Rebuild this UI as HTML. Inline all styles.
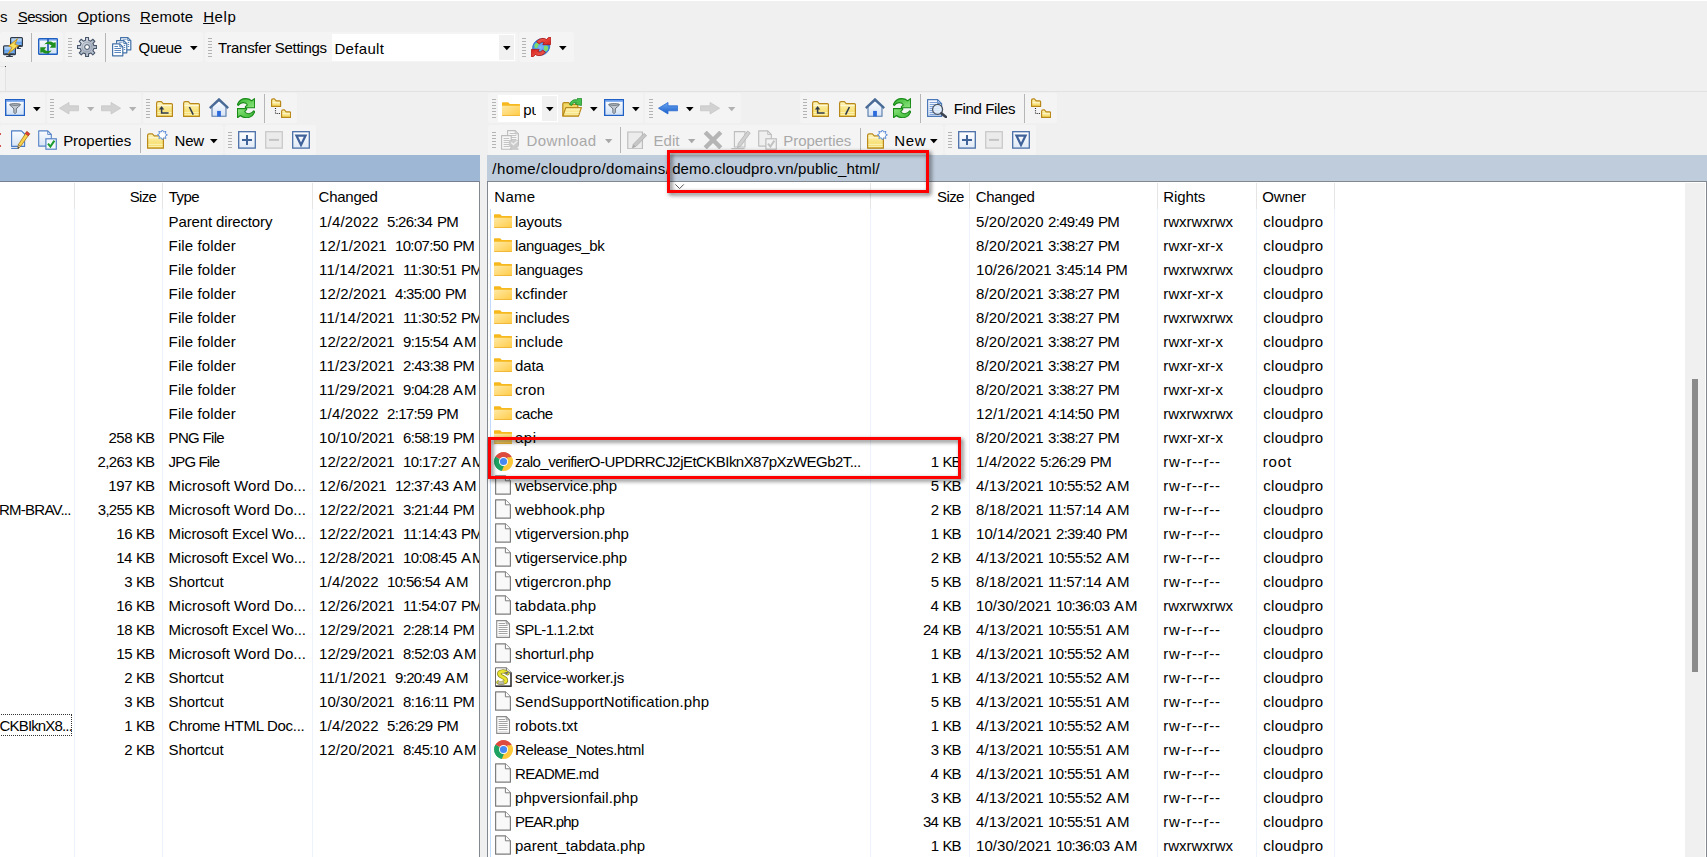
<!DOCTYPE html>
<html><head><meta charset="utf-8"><title>WinSCP</title>
<style>
html,body{margin:0;padding:0}
body{width:1707px;height:857px;overflow:hidden;position:relative;background:#f0f0f0;font-family:"Liberation Sans", sans-serif;font-size:15px}
.t{position:absolute;white-space:pre;line-height:20px;height:20px}
u{text-decoration-thickness:1px;text-underline-offset:1px}
</style></head><body>

<svg width="0" height="0" style="position:absolute">
<defs>
<linearGradient id="gFold" x1="0" y1="0" x2="1" y2="1"><stop offset="0" stop-color="#ffe9a6"/><stop offset="1" stop-color="#ffcb45"/></linearGradient>
<linearGradient id="gFoldT" x1="0" y1="0" x2="0" y2="1"><stop offset="0" stop-color="#fef6c0"/><stop offset="0.55" stop-color="#f9e482"/><stop offset="1" stop-color="#f5d962"/></linearGradient>
<linearGradient id="gMon" x1="0" y1="0" x2="0" y2="1"><stop offset="0" stop-color="#cfe4fb"/><stop offset="0.45" stop-color="#8fc0f5"/><stop offset="0.5" stop-color="#5f9eea"/><stop offset="1" stop-color="#8cc0f7"/></linearGradient>
<linearGradient id="gGear" x1="0" y1="0" x2="1" y2="1"><stop offset="0" stop-color="#f4f6f9"/><stop offset="0.6" stop-color="#aab4c2"/><stop offset="1" stop-color="#d5dbe3"/></linearGradient>
<linearGradient id="gGreen" x1="0" y1="0" x2="1" y2="1"><stop offset="0" stop-color="#35b52f"/><stop offset="1" stop-color="#8fe680"/></linearGradient>
<linearGradient id="gBlueArr" x1="0" y1="0" x2="0" y2="1"><stop offset="0" stop-color="#6aa8f5"/><stop offset="1" stop-color="#1b5ec8"/></linearGradient>
<linearGradient id="gPane" x1="0" y1="0" x2="0" y2="1"><stop offset="0" stop-color="#ffffff"/><stop offset="1" stop-color="#cfe0f5"/></linearGradient>
<linearGradient id="gPage" x1="0" y1="0" x2="0" y2="1"><stop offset="0" stop-color="#fafcff"/><stop offset="1" stop-color="#d6e4f5"/></linearGradient>
<linearGradient id="gBox" x1="0" y1="0" x2="0" y2="1"><stop offset="0" stop-color="#ffffff"/><stop offset="1" stop-color="#dfe9f6"/></linearGradient>
<linearGradient id="gGray" x1="0" y1="0" x2="0" y2="1"><stop offset="0" stop-color="#dcdcdc"/><stop offset="1" stop-color="#c6c6c6"/></linearGradient>
<linearGradient id="gRed" x1="0" y1="0" x2="1" y2="1"><stop offset="0" stop-color="#f26a5c"/><stop offset="1" stop-color="#d8201a"/></linearGradient>
<radialGradient id="gGlobe" cx="0.45" cy="0.5" r="0.6"><stop offset="0" stop-color="#7db9ff"/><stop offset="1" stop-color="#2a7be0"/></radialGradient>
</defs></svg>

<div style="position:absolute;left:0px;top:0px;width:1707px;height:1px;background:#ffffff;"></div>
<div style="position:absolute;left:0px;top:91px;width:1707px;height:1px;background:#e2e2e2;"></div>
<div style="position:absolute;left:0px;top:32px;width:63px;height:30px;background:#f4f4f4;border-radius:3px"></div>
<div style="position:absolute;left:65px;top:32px;width:138px;height:30px;background:#f4f4f4;border-radius:3px"></div>
<div style="position:absolute;left:205px;top:32px;width:313px;height:30px;background:#f4f4f4;border-radius:3px"></div>
<div style="position:absolute;left:519px;top:32px;width:55px;height:30px;background:#f4f4f4;border-radius:3px"></div>
<div style="position:absolute;left:0px;top:93px;width:45px;height:30px;background:#f4f4f4;border-radius:3px"></div>
<div style="position:absolute;left:47px;top:93px;width:94px;height:30px;background:#f4f4f4;border-radius:3px"></div>
<div style="position:absolute;left:143px;top:93px;width:154px;height:30px;background:#f4f4f4;border-radius:3px"></div>
<div style="position:absolute;left:0px;top:125px;width:223px;height:30px;background:#f4f4f4;border-radius:3px"></div>
<div style="position:absolute;left:225px;top:125px;width:91px;height:30px;background:#f4f4f4;border-radius:3px"></div>
<div style="position:absolute;left:488px;top:93px;width:155px;height:30px;background:#f4f4f4;border-radius:3px"></div>
<div style="position:absolute;left:645px;top:93px;width:96px;height:30px;background:#f4f4f4;border-radius:3px"></div>
<div style="position:absolute;left:800px;top:93px;width:257px;height:30px;background:#f4f4f4;border-radius:3px"></div>
<div style="position:absolute;left:488px;top:125px;width:455px;height:30px;background:#f4f4f4;border-radius:3px"></div>
<div style="position:absolute;left:945px;top:125px;width:91px;height:30px;background:#f4f4f4;border-radius:3px"></div>
<span class="t" style="top:6.50px;letter-spacing:0.000px;color:#000;left:-0.03px;">s</span>
<span class="t" style="top:6.50px;letter-spacing:-0.609px;color:#000;left:17.73px;"><u>S</u>ession</span>
<span class="t" style="top:6.50px;letter-spacing:0.163px;color:#000;left:77.50px;"><u>O</u>ptions</span>
<span class="t" style="top:6.50px;letter-spacing:0.112px;color:#000;left:140.03px;"><u>R</u>emote</span>
<span class="t" style="top:6.50px;letter-spacing:0.643px;color:#000;left:203.13px;"><u>H</u>elp</span>
<svg style="position:absolute;left:3px;top:37px" width="20" height="20" viewBox="0 0 20 20" ><rect x="7.6" y="0.6" width="11.8" height="8.8" rx="0.9" fill="url(#gMon)" stroke="#2f3b4b" stroke-width="1.2"/><path d="M8.4 8.6 H18.6" stroke="#2a3340" stroke-width="1"/><rect x="14" y="10" width="2" height="1.2" fill="#2f3b4b"/><rect x="13.6" y="11" width="4.4" height="1" rx="0.4" fill="#2f3b4b"/><rect x="0.6" y="8.799999999999999" width="11.8" height="8.8" rx="0.9" fill="url(#gMon)" stroke="#2f3b4b" stroke-width="1.2"/><path d="M1.4 16.799999999999997 H11.6" stroke="#2a3340" stroke-width="1"/><rect x="5.4" y="18" width="2.2" height="1.2" fill="#2f3b4b"/><rect x="3" y="19" width="7" height="1" rx="0.4" fill="#2f3b4b"/><path d="M14.4 1.8 L5.8 9 L9 10.4 L5.2 16.6 L15.4 8.6 L11.8 7.2 Z" fill="#f7df5e" stroke="#c8921a" stroke-width="1" stroke-linejoin="round"/></svg>
<div style="position:absolute;left:31px;top:33px;width:1.3px;height:29px;background:#b6b6b6"></div>
<svg style="position:absolute;left:38px;top:38px" width="20" height="17" viewBox="0 0 20 17" ><rect x="0.7" y="0.7" width="18.6" height="15.6" rx="0.6" fill="url(#gPane)" stroke="#1f5fbf" stroke-width="1.4"/><rect x="1.2" y="1.3" width="17.6" height="1.2" fill="#5d93e8"/><rect x="9.2" y="1" width="1.6" height="15" fill="#1753b4"/><path d="M6.3 6.4 C8.4 3 12.8 2.6 15.4 4.8 L17.7 4.2 L17.7 9.8 L11.8 9.8 L13.6 7.6 C12 6.2 9.6 5.6 6.3 6.4 Z" fill="#1f8f1f"/><g transform="rotate(180 10 9.5)"><path d="M6.3 6.4 C8.4 3 12.8 2.6 15.4 4.8 L17.7 4.2 L17.7 9.8 L11.8 9.8 L13.6 7.6 C12 6.2 9.6 5.6 6.3 6.4 Z" fill="#1f8f1f"/></g></svg>
<svg style="position:absolute;left:68px;top:38px" width="4" height="20" viewBox="0 0 4 20" ><rect x="0" y="0" width="4" height="1" fill="#b3b3b3"/><rect x="0" y="3" width="4" height="1" fill="#b3b3b3"/><rect x="0" y="6" width="4" height="1" fill="#b3b3b3"/><rect x="0" y="9" width="4" height="1" fill="#b3b3b3"/><rect x="0" y="12" width="4" height="1" fill="#b3b3b3"/><rect x="0" y="15" width="4" height="1" fill="#b3b3b3"/><rect x="0" y="18" width="4" height="1" fill="#b3b3b3"/></svg>
<svg style="position:absolute;left:77px;top:36.8px" width="20.2" height="20.2" viewBox="0 0 20.2 20.2" ><path d="M8.52 3.22 L8.60 0.46 L11.50 0.46 L11.58 3.22 L13.80 4.14 L15.81 2.24 L17.86 4.29 L15.96 6.30 L16.88 8.52 L19.64 8.60 L19.64 11.50 L16.88 11.58 L15.96 13.80 L17.86 15.81 L15.81 17.86 L13.80 15.96 L11.58 16.88 L11.50 19.64 L8.60 19.64 L8.52 16.88 L6.30 15.96 L4.29 17.86 L2.24 15.81 L4.14 13.80 L3.22 11.58 L0.46 11.50 L0.46 8.60 L3.22 8.52 L4.14 6.30 L2.24 4.29 L4.29 2.24 L6.30 4.14 Z" fill="url(#gGear)" stroke="#46556a" stroke-width="1.1" stroke-linejoin="round"/><circle cx="10.05" cy="10.05" r="5" fill="none" stroke="#8e9aab" stroke-width="0.7"/><circle cx="10.05" cy="10.05" r="2.4" fill="#fbfbfb" stroke="#46556a" stroke-width="1"/></svg>
<div style="position:absolute;left:105px;top:33px;width:1.3px;height:29px;background:#b6b6b6"></div>
<svg style="position:absolute;left:112px;top:37px" width="20" height="20" viewBox="0 0 20 20" ><path d="M8.6 0.6 H15.799999999999997 L18.799999999999997 3.6 V12.799999999999999 H8.6 Z" fill="#fbfdff" stroke="#4472a8" stroke-width="1.2" stroke-linejoin="round"/><path d="M15.799999999999997 0.6 V3.6 H18.799999999999997" fill="none" stroke="#4472a8" stroke-width="0.96"/><path d="M15.8 5.5 H17.2 M15.8 7.5 H17.2 M15.8 9.5 H17.2" stroke="#5a86bd" stroke-width="1"/><path d="M10.6 2.5 H14.6" stroke="#5a86bd" stroke-width="1" stroke-opacity="0.6"/><path d="M4.6 3.6 H11.799999999999999 L14.799999999999999 6.6 V15.799999999999999 H4.6 Z" fill="#fbfdff" stroke="#4472a8" stroke-width="1.2" stroke-linejoin="round"/><path d="M11.799999999999999 3.6 V6.6 H14.799999999999999" fill="none" stroke="#4472a8" stroke-width="0.96"/><path d="M11.8 8.5 H13.2 M11.8 10.5 H13.2 M11.8 12.5 H13.2" stroke="#5a86bd" stroke-width="1"/><path d="M6.6 5.5 H10.6" stroke="#5a86bd" stroke-width="1" stroke-opacity="0.6"/><path d="M0.6 6.8 H7.799999999999999 L10.799999999999999 9.8 V18.8 H0.6 Z" fill="#fbfdff" stroke="#4472a8" stroke-width="1.2" stroke-linejoin="round"/><path d="M7.799999999999999 6.8 V9.8 H10.799999999999999" fill="none" stroke="#4472a8" stroke-width="0.96"/><path d="M2.4 9.5 H6 M2.4 11.5 H9 M2.4 13.5 H9 M2.4 15.5 H9" stroke="#5a86bd" stroke-width="1"/></svg>
<span class="t" style="top:37.80px;letter-spacing:-0.381px;color:#000;left:138.60px;">Queue</span>
<svg style="position:absolute;left:190.3px;top:45.8px" width="9" height="5" viewBox="0 0 9 5" ><path d="M0 0 H7.6 L3.8 4.256 Z" fill="#000"/></svg>
<svg style="position:absolute;left:208px;top:38px" width="4" height="20" viewBox="0 0 4 20" ><rect x="0" y="0" width="4" height="1" fill="#b3b3b3"/><rect x="0" y="3" width="4" height="1" fill="#b3b3b3"/><rect x="0" y="6" width="4" height="1" fill="#b3b3b3"/><rect x="0" y="9" width="4" height="1" fill="#b3b3b3"/><rect x="0" y="12" width="4" height="1" fill="#b3b3b3"/><rect x="0" y="15" width="4" height="1" fill="#b3b3b3"/><rect x="0" y="18" width="4" height="1" fill="#b3b3b3"/></svg>
<span class="t" style="top:37.80px;letter-spacing:-0.297px;color:#000;left:218.07px;">Transfer Settings</span>
<div style="position:absolute;left:332px;top:34px;width:183px;height:27px;background:#ffffff;"></div>
<div style="position:absolute;left:499px;top:35px;width:15px;height:25px;background:#f1f1f1;"></div>
<span class="t" style="top:38.80px;letter-spacing:0.332px;color:#000;left:334.43px;">Default</span>
<svg style="position:absolute;left:502.7px;top:45.8px" width="9" height="5" viewBox="0 0 9 5" ><path d="M0 0 H7.6 L3.8 4.256 Z" fill="#000"/></svg>
<svg style="position:absolute;left:522px;top:38px" width="4" height="20" viewBox="0 0 4 20" ><rect x="0" y="0" width="4" height="1" fill="#b3b3b3"/><rect x="0" y="3" width="4" height="1" fill="#b3b3b3"/><rect x="0" y="6" width="4" height="1" fill="#b3b3b3"/><rect x="0" y="9" width="4" height="1" fill="#b3b3b3"/><rect x="0" y="12" width="4" height="1" fill="#b3b3b3"/><rect x="0" y="15" width="4" height="1" fill="#b3b3b3"/><rect x="0" y="18" width="4" height="1" fill="#b3b3b3"/></svg>
<svg style="position:absolute;left:531px;top:37px" width="20" height="20" viewBox="0 0 20 20" ><ellipse cx="10.2" cy="10" rx="8.9" ry="8" transform="rotate(-35 10.2 10)" fill="url(#gGlobe)" stroke="#1f66c0" stroke-width="0.6"/><path d="M3.4 8 C4.6 5.4 7.6 5.2 8.2 6.6 C8.6 8 6.6 8.4 6.8 10 C6.4 11.2 4.4 11.6 3.6 10.6 Z" fill="#7ddc6c"/><path d="M13.2 9 C15.4 7.6 17.6 8.8 17.2 11.4 C16.8 13.6 15 14.8 13.6 14 C12.6 12.6 12.6 10.4 13.2 9 Z" fill="#7ddc6c"/><path d="M7 15.4 C8 14.4 10 14.6 10.6 15.8 C9.6 16.8 8 16.6 7 15.4 Z" fill="#7ddc6c"/><path d="M5.6 4.8 C8 1 13.4 0.6 15.6 2.6 L17.4 0.6 L19.7 0.3 L19.7 7.6 L11.8 7.6 L13.2 5.6 C11.4 4.6 9.4 5.2 8.4 7 Z" fill="url(#gRed)" stroke="#b0100c" stroke-width="0.8" stroke-linejoin="round"/><g transform="rotate(180 10 10)"><path d="M5.6 4.8 C8 1 13.4 0.6 15.6 2.6 L17.4 0.6 L19.7 0.3 L19.7 7.6 L11.8 7.6 L13.2 5.6 C11.4 4.6 9.4 5.2 8.4 7 Z" fill="url(#gRed)" stroke="#b0100c" stroke-width="0.8" stroke-linejoin="round"/></g></svg>
<svg style="position:absolute;left:558.7px;top:45.8px" width="9" height="5" viewBox="0 0 9 5" ><path d="M0 0 H7.6 L3.8 4.256 Z" fill="#000"/></svg>
<div style="position:absolute;left:0px;top:66px;width:5px;height:25px;background:#f2f2f2;"></div>
<div style="position:absolute;left:5px;top:67px;width:1px;height:24px;background:#e2e2e2;"></div>
<div style="position:absolute;left:0px;top:66px;width:5px;height:1px;background:#e6e6e6;"></div>
<div style="position:absolute;left:5px;top:66px;width:1px;height:1px;background:#444;"></div>
<svg style="position:absolute;left:4.8px;top:98.8px" width="20.2" height="17.2" viewBox="0 0 20.2 17.2" ><rect x="0.7" y="0.7" width="18.8" height="15.8" fill="url(#gPane)" stroke="#2060c4" stroke-width="1.4"/><rect x="1.3" y="1.3" width="17.6" height="1.4" fill="#5b92ea"/><path d="M4.6 5.6 C4.6 4.4 15.6 4.4 15.6 5.6 C15.6 6.6 11.4 8.8 11.3 10 L11.3 13.6 C11.3 14.6 8.9 14.6 8.9 13.6 L8.9 10 C8.8 8.8 4.6 6.6 4.6 5.6 Z" fill="#c3c9d1" stroke="#646d78" stroke-width="1" stroke-linejoin="round"/><path d="M5.4 5.7 C7 6.6 13.2 6.6 14.8 5.7" fill="none" stroke="#646d78" stroke-width="0.9"/></svg>
<svg style="position:absolute;left:33px;top:106.8px" width="9" height="5" viewBox="0 0 9 5" ><path d="M0 0 H7.6 L3.8 4.256 Z" fill="#000"/></svg>
<svg style="position:absolute;left:50px;top:99px" width="4" height="20" viewBox="0 0 4 20" ><rect x="0" y="0" width="4" height="1" fill="#b3b3b3"/><rect x="0" y="3" width="4" height="1" fill="#b3b3b3"/><rect x="0" y="6" width="4" height="1" fill="#b3b3b3"/><rect x="0" y="9" width="4" height="1" fill="#b3b3b3"/><rect x="0" y="12" width="4" height="1" fill="#b3b3b3"/><rect x="0" y="15" width="4" height="1" fill="#b3b3b3"/><rect x="0" y="18" width="4" height="1" fill="#b3b3b3"/></svg>
<svg style="position:absolute;left:59px;top:102.2px" width="20" height="12.6" viewBox="0 0 20 12.6" ><path d="M0.5 6.2 L10 0.5 L10 3.8 L19.6 3.8 L19.6 8.8 L10 8.8 L10 12 Z" fill="#d2d2d2" stroke="#c6c6c6" stroke-width="0.8" stroke-linejoin="round"/></svg>
<svg style="position:absolute;left:86.8px;top:107px" width="9" height="5" viewBox="0 0 9 5" ><path d="M0 0 H7.4 L3.7 4.144000000000001 Z" fill="#b2b2b2"/></svg>
<svg style="position:absolute;left:101px;top:102.2px" width="20" height="12.6" viewBox="0 0 20 12.6" ><path d="M19.6 6.2 L10.1 0.5 L10.1 3.8 L0.5 3.8 L0.5 8.8 L10.1 8.8 L10.1 12 Z" fill="#d2d2d2" stroke="#c6c6c6" stroke-width="0.8" stroke-linejoin="round"/></svg>
<svg style="position:absolute;left:128.7px;top:107px" width="9" height="5" viewBox="0 0 9 5" ><path d="M0 0 H7.4 L3.7 4.144000000000001 Z" fill="#b2b2b2"/></svg>
<svg style="position:absolute;left:146px;top:99px" width="4" height="20" viewBox="0 0 4 20" ><rect x="0" y="0" width="4" height="1" fill="#b3b3b3"/><rect x="0" y="3" width="4" height="1" fill="#b3b3b3"/><rect x="0" y="6" width="4" height="1" fill="#b3b3b3"/><rect x="0" y="9" width="4" height="1" fill="#b3b3b3"/><rect x="0" y="12" width="4" height="1" fill="#b3b3b3"/><rect x="0" y="15" width="4" height="1" fill="#b3b3b3"/><rect x="0" y="18" width="4" height="1" fill="#b3b3b3"/></svg>
<svg style="position:absolute;left:156px;top:101px" width="17" height="16" viewBox="0 0 17 16" ><path d="M0.6 15.4 V2.2 Q0.6 0.6 2.2 0.6 H5.4 L7.2 2.6 H15.4 Q16.4 2.6 16.4 3.6 V15.4 Z" fill="url(#gFoldT)" stroke="#b8881a" stroke-width="1.2" stroke-linejoin="round"/><path d="M1.4 4.6 H15.6" stroke="#fffbe0" stroke-width="0.9"/><path d="M1.4 11.6 H15.6 M1.4 13.6 H15.6" stroke="#fdf6c4" stroke-width="0.8"/><path d="M5.6 7.4 V12 H12.6" fill="none" stroke="#2f3b4b" stroke-width="1.5"/><path d="M2.9 8.4 L5.6 5 L8.3 8.4 Z" fill="#2f3b4b"/></svg>
<svg style="position:absolute;left:183px;top:101px" width="17" height="16" viewBox="0 0 17 16" ><path d="M0.6 15.4 V2.2 Q0.6 0.6 2.2 0.6 H5.4 L7.2 2.6 H15.4 Q16.4 2.6 16.4 3.6 V15.4 Z" fill="url(#gFoldT)" stroke="#b8881a" stroke-width="1.2" stroke-linejoin="round"/><path d="M1.4 4.6 H15.6" stroke="#fffbe0" stroke-width="0.9"/><path d="M1.4 11.6 H15.6 M1.4 13.6 H15.6" stroke="#fdf6c4" stroke-width="0.8"/><path d="M6.4 6 L10.2 13.6" stroke="#2f3b4b" stroke-width="1.6"/></svg>
<svg style="position:absolute;left:209px;top:98px" width="20" height="19" viewBox="0 0 20 19" ><path d="M3 8.6 V18.2 H17 V8.6 L10 2.6 Z" fill="url(#gPage)" stroke="#5578a8" stroke-width="1.1"/><rect x="8.1" y="12.9" width="3.8" height="5.6" fill="#2c6bdc"/><path d="M0.8 10.2 L10 1.4 L19.2 10.2" fill="none" stroke="#4a6b96" stroke-width="2.3" stroke-linejoin="miter"/></svg>
<svg style="position:absolute;left:237px;top:97.8px" width="18.2" height="20.4" viewBox="0 0 18.2 20.4" ><path d="M0.3 6.7 C2 2.6 5.5 0.6 8.6 0.6 C11 0.6 13.2 1.3 14.7 2.8 L17.5 0.6 L17.7 9.8 L8.4 9.7 L8.4 8.7 L10.4 6.9 C9.6 5.1 7.6 4.5 6 4.6 C4 4.7 2.4 5.7 1.3 7.4 Z" fill="url(#gGreen)" stroke="#178a17" stroke-width="1.1" stroke-linejoin="round"/><g transform="rotate(180 9.05 10.15)"><path d="M0.3 6.7 C2 2.6 5.5 0.6 8.6 0.6 C11 0.6 13.2 1.3 14.7 2.8 L17.5 0.6 L17.7 9.8 L8.4 9.7 L8.4 8.7 L10.4 6.9 C9.6 5.1 7.6 4.5 6 4.6 C4 4.7 2.4 5.7 1.3 7.4 Z" fill="url(#gGreen)" stroke="#178a17" stroke-width="1.1" stroke-linejoin="round"/></g></svg>
<div style="position:absolute;left:264px;top:94px;width:1.3px;height:29px;background:#b6b6b6"></div>
<svg style="position:absolute;left:271px;top:98px" width="20.4" height="20.4" viewBox="0 0 20.4 20.4" ><path d="M0.6 8.4 V2.4000000000000004 Q0.6 0.8 2.2 0.8 H3.4 L5.2 2.8000000000000003 H8.6 Q9.6 2.8000000000000003 9.6 3.8000000000000003 V8.4 Z" fill="url(#gFoldT)" stroke="#b8881a" stroke-width="1.2" stroke-linejoin="round"/><path d="M1.4 4.8 H8.799999999999999" stroke="#fffbe0" stroke-width="0.9"/><path d="M10.6 19.4 V13.399999999999999 Q10.6 11.799999999999999 12.2 11.799999999999999 H13.4 L15.2 13.799999999999999 H18.599999999999998 Q19.599999999999998 13.799999999999999 19.599999999999998 14.799999999999999 V19.4 Z" fill="url(#gFoldT)" stroke="#b8881a" stroke-width="1.2" stroke-linejoin="round"/><path d="M11.4 15.799999999999999 H18.8" stroke="#fffbe0" stroke-width="0.9"/><path d="M4.5 10 V15.5 H9.4" fill="none" stroke="#222" stroke-width="1.1" stroke-dasharray="1.1 1.1"/></svg>
<div style="position:absolute;left:0px;top:132.5px;width:1.3px;height:2.2px;background:#c4201c;border-radius:0 1px 1px 0"></div>
<div style="position:absolute;left:0px;top:145px;width:1.3px;height:2.4px;background:#c4201c;border-radius:0 1px 1px 0"></div>
<svg style="position:absolute;left:11px;top:130px" width="20" height="19" viewBox="0 0 20 19" ><path d="M0.6 0.9 H10.4 L13.6 4 V16.4 H0.6 Z" fill="url(#gPage)" stroke="#4a7cc4" stroke-width="1.1" stroke-linejoin="round"/><path d="M0.2 18.4 H7.4" stroke="#4a7cc4" stroke-width="1.1"/><path d="M15.8 1.6 L18.6 3.8 L9.6 16.4 L7 18.4 L7.4 14.6 Z" fill="#f8d24a" stroke="#a8781a" stroke-width="0.8" stroke-linejoin="round"/><path d="M15.8 1.6 L18.6 3.8 L17.2 5.8 L14.4 3.6 Z" fill="#e64037" stroke="#a81c18" stroke-width="0.6"/><path d="M7.4 14.6 L9.6 16.4 L7 18.4 Z" fill="#f0d9a8" stroke="#5a4a2a" stroke-width="0.5"/><path d="M7 18.4 L7.2 16.9 L8.2 17.6 Z" fill="#222"/></svg>
<svg style="position:absolute;left:38px;top:130px" width="19" height="20" viewBox="0 0 19 20" ><path d="M0.7 0.9 H9.7 L13.299999999999999 4.5 V16.099999999999998 H0.7 Z" fill="url(#gPage)" stroke="#5583c6" stroke-width="1.1" stroke-linejoin="round"/><path d="M9.7 0.9 V4.5 H13.299999999999999" fill="none" stroke="#5583c6" stroke-width="0.88"/><rect x="7.9" y="8.8" width="10.4" height="10.4" fill="#f3f8fe" stroke="#5583c6" stroke-width="1.2"/><path d="M10 13.6 L12.4 16.6 L16.4 10.6" fill="none" stroke="#1f9c2f" stroke-width="2"/></svg>
<span class="t" style="top:130.80px;letter-spacing:-0.036px;color:#000;left:63.13px;">Properties</span>
<div style="position:absolute;left:140px;top:128px;width:1.3px;height:25px;background:#b6b6b6"></div>
<svg style="position:absolute;left:147px;top:130px" width="21" height="19" viewBox="0 0 21 19" ><path d="M0.6 18.2 V5.4 Q0.6 3.8000000000000003 2.2 3.8000000000000003 H5.4 L7.2 5.800000000000001 H15.4 Q16.4 5.800000000000001 16.4 6.800000000000001 V18.2 Z" fill="url(#gFoldT)" stroke="#b8881a" stroke-width="1.2" stroke-linejoin="round"/><path d="M1.4 7.8 H15.6" stroke="#fffbe0" stroke-width="0.9"/><path d="M1.4 14.4 H15.6 M1.4 16.400000000000002 H15.6" stroke="#fdf6c4" stroke-width="0.8"/><path d="M15.40 -0.10 L16.59 2.04 L18.94 1.36 L18.26 3.71 L20.40 4.90 L18.26 6.09 L18.94 8.44 L16.59 7.76 L15.40 9.90 L14.21 7.76 L11.86 8.44 L12.54 6.09 L10.40 4.90 L12.54 3.71 L11.86 1.36 L14.21 2.04 Z" fill="#fff" stroke="#5f8fd8" stroke-width="1" stroke-linejoin="round"/></svg>
<span class="t" style="top:130.80px;letter-spacing:-0.159px;color:#000;left:174.53px;">New</span>
<svg style="position:absolute;left:209.8px;top:139.2px" width="9" height="5" viewBox="0 0 9 5" ><path d="M0 0 H7.6 L3.8 4.256 Z" fill="#000"/></svg>
<svg style="position:absolute;left:228px;top:132px" width="4" height="17" viewBox="0 0 4 17" ><rect x="0" y="0" width="4" height="1" fill="#b3b3b3"/><rect x="0" y="3" width="4" height="1" fill="#b3b3b3"/><rect x="0" y="6" width="4" height="1" fill="#b3b3b3"/><rect x="0" y="9" width="4" height="1" fill="#b3b3b3"/><rect x="0" y="12" width="4" height="1" fill="#b3b3b3"/><rect x="0" y="15" width="4" height="1" fill="#b3b3b3"/></svg>
<svg style="position:absolute;left:238px;top:131px" width="18" height="18" viewBox="0 0 18 18" ><rect x="0.7" y="0.7" width="16.6" height="16.4" fill="url(#gBox)" stroke="#4a6fa8" stroke-width="1.3"/><path d="M4 8.9 H14 M9 3.9 V13.9" stroke="#3f6299" stroke-width="2"/></svg>
<svg style="position:absolute;left:265px;top:131px" width="18" height="18" viewBox="0 0 18 18" ><rect x="0.7" y="0.7" width="16.6" height="16.4" fill="#ebebeb" stroke="#c9c9c9" stroke-width="1.3"/><path d="M4 8.9 H14" stroke="#c4c4c4" stroke-width="2"/></svg>
<svg style="position:absolute;left:292px;top:131px" width="18" height="18" viewBox="0 0 18 18" ><rect x="0.7" y="0.7" width="16.6" height="16.4" fill="url(#gBox)" stroke="#4a6fa8" stroke-width="1.3"/><path d="M4.4 4.6 H13.6 L9 14 Z" fill="none" stroke="#3f6299" stroke-width="2.2" stroke-linejoin="miter"/></svg>
<svg style="position:absolute;left:492px;top:99px" width="4" height="20" viewBox="0 0 4 20" ><rect x="0" y="0" width="4" height="1" fill="#b3b3b3"/><rect x="0" y="3" width="4" height="1" fill="#b3b3b3"/><rect x="0" y="6" width="4" height="1" fill="#b3b3b3"/><rect x="0" y="9" width="4" height="1" fill="#b3b3b3"/><rect x="0" y="12" width="4" height="1" fill="#b3b3b3"/><rect x="0" y="15" width="4" height="1" fill="#b3b3b3"/><rect x="0" y="18" width="4" height="1" fill="#b3b3b3"/></svg>
<div style="position:absolute;left:498px;top:95px;width:60px;height:27px;background:#ffffff;"></div>
<div style="position:absolute;left:542px;top:96px;width:15px;height:25px;background:#f1f1f1;"></div>
<svg style="position:absolute;left:502px;top:101.7px" width="18" height="14" viewBox="0 0 18 14" ><path d="M0 1 Q0 0.2 0.8 0.2 L6.2 0.2 L7.8 2.1 L17.4 2.1 Q18 2.1 18 2.7 L18 13 L0 13 Z" fill="#f6b81c"/><path d="M0 3.7 L18 3.7 L18 13.4 Q18 14 17.4 14 L0.6 14 Q0 14 0 13.4 Z" fill="url(#gFold)"/><path d="M0.3 13.6 H17.7" stroke="#eaae2c" stroke-width="0.8"/></svg>
<span class="t" style="top:99.80px;letter-spacing:0.000px;color:#000;left:523.26px;width:12.94px;overflow:hidden;">public_html</span>
<svg style="position:absolute;left:545.8px;top:106.8px" width="9" height="5" viewBox="0 0 9 5" ><path d="M0 0 H7.6 L3.8 4.256 Z" fill="#000"/></svg>
<svg style="position:absolute;left:562px;top:98px" width="20.4" height="19" viewBox="0 0 20.4 19" ><path d="M0.8 18 V6 Q0.8 4.6 2.2 4.6 H6.6 L8.2 6.4 H14.6 Q15.8 6.4 15.8 7.6 V9.6" fill="#f1d766" stroke="#b8881a" stroke-width="1.2" stroke-linejoin="round"/><path d="M0.8 18.2 L3.8 9.6 H19.4 L16.4 18.2 Z" fill="url(#gFoldT)" stroke="#b8881a" stroke-width="1.2" stroke-linejoin="round"/><path d="M3 14.4 H17.4 M2.4 16.2 H16.8" stroke="#fdf6c4" stroke-width="0.8"/><path d="M7.8 6.8 C8.4 2.4 12.4 1 15.2 2 L15.6 0.2 L19.6 0.4 L19.4 7.6 L13.2 6 L14.6 4.6 C12.6 4 10.6 5 9.8 7.4 Z" fill="#49c052" stroke="#1c8a26" stroke-width="0.8" stroke-linejoin="round"/></svg>
<svg style="position:absolute;left:589.7px;top:106.8px" width="9" height="5" viewBox="0 0 9 5" ><path d="M0 0 H7.6 L3.8 4.256 Z" fill="#000"/></svg>
<svg style="position:absolute;left:604px;top:99px" width="20.2" height="17.2" viewBox="0 0 20.2 17.2" ><rect x="0.7" y="0.7" width="18.8" height="15.8" fill="url(#gPane)" stroke="#2060c4" stroke-width="1.4"/><rect x="1.3" y="1.3" width="17.6" height="1.4" fill="#5b92ea"/><path d="M4.6 5.6 C4.6 4.4 15.6 4.4 15.6 5.6 C15.6 6.6 11.4 8.8 11.3 10 L11.3 13.6 C11.3 14.6 8.9 14.6 8.9 13.6 L8.9 10 C8.8 8.8 4.6 6.6 4.6 5.6 Z" fill="#c3c9d1" stroke="#646d78" stroke-width="1" stroke-linejoin="round"/><path d="M5.4 5.7 C7 6.6 13.2 6.6 14.8 5.7" fill="none" stroke="#646d78" stroke-width="0.9"/></svg>
<svg style="position:absolute;left:631.6px;top:106.8px" width="9" height="5" viewBox="0 0 9 5" ><path d="M0 0 H7.6 L3.8 4.256 Z" fill="#000"/></svg>
<svg style="position:absolute;left:649px;top:99px" width="4" height="20" viewBox="0 0 4 20" ><rect x="0" y="0" width="4" height="1" fill="#b3b3b3"/><rect x="0" y="3" width="4" height="1" fill="#b3b3b3"/><rect x="0" y="6" width="4" height="1" fill="#b3b3b3"/><rect x="0" y="9" width="4" height="1" fill="#b3b3b3"/><rect x="0" y="12" width="4" height="1" fill="#b3b3b3"/><rect x="0" y="15" width="4" height="1" fill="#b3b3b3"/><rect x="0" y="18" width="4" height="1" fill="#b3b3b3"/></svg>
<svg style="position:absolute;left:658px;top:102px" width="20" height="12.6" viewBox="0 0 20 12.6" ><path d="M0.5 6.2 L10 0.5 L10 3.8 L19.6 3.8 L19.6 8.8 L10 8.8 L10 12 Z" fill="url(#gBlueArr)" stroke="#2a6bd0" stroke-width="0.8" stroke-linejoin="round"/></svg>
<svg style="position:absolute;left:685.5px;top:106.8px" width="9" height="5" viewBox="0 0 9 5" ><path d="M0 0 H7.6 L3.8 4.256 Z" fill="#000"/></svg>
<svg style="position:absolute;left:700px;top:102.2px" width="20" height="12.6" viewBox="0 0 20 12.6" ><path d="M19.6 6.2 L10.1 0.5 L10.1 3.8 L0.5 3.8 L0.5 8.8 L10.1 8.8 L10.1 12 Z" fill="#d2d2d2" stroke="#c6c6c6" stroke-width="0.8" stroke-linejoin="round"/></svg>
<svg style="position:absolute;left:727.5px;top:107px" width="9" height="5" viewBox="0 0 9 5" ><path d="M0 0 H7.4 L3.7 4.144000000000001 Z" fill="#b2b2b2"/></svg>
<svg style="position:absolute;left:803px;top:99px" width="4" height="20" viewBox="0 0 4 20" ><rect x="0" y="0" width="4" height="1" fill="#b3b3b3"/><rect x="0" y="3" width="4" height="1" fill="#b3b3b3"/><rect x="0" y="6" width="4" height="1" fill="#b3b3b3"/><rect x="0" y="9" width="4" height="1" fill="#b3b3b3"/><rect x="0" y="12" width="4" height="1" fill="#b3b3b3"/><rect x="0" y="15" width="4" height="1" fill="#b3b3b3"/><rect x="0" y="18" width="4" height="1" fill="#b3b3b3"/></svg>
<svg style="position:absolute;left:811.5px;top:101px" width="17" height="16" viewBox="0 0 17 16" ><path d="M0.6 15.4 V2.2 Q0.6 0.6 2.2 0.6 H5.4 L7.2 2.6 H15.4 Q16.4 2.6 16.4 3.6 V15.4 Z" fill="url(#gFoldT)" stroke="#b8881a" stroke-width="1.2" stroke-linejoin="round"/><path d="M1.4 4.6 H15.6" stroke="#fffbe0" stroke-width="0.9"/><path d="M1.4 11.6 H15.6 M1.4 13.6 H15.6" stroke="#fdf6c4" stroke-width="0.8"/><path d="M5.6 7.4 V12 H12.6" fill="none" stroke="#2f3b4b" stroke-width="1.5"/><path d="M2.9 8.4 L5.6 5 L8.3 8.4 Z" fill="#2f3b4b"/></svg>
<svg style="position:absolute;left:839px;top:101px" width="17" height="16" viewBox="0 0 17 16" ><path d="M0.6 15.4 V2.2 Q0.6 0.6 2.2 0.6 H5.4 L7.2 2.6 H15.4 Q16.4 2.6 16.4 3.6 V15.4 Z" fill="url(#gFoldT)" stroke="#b8881a" stroke-width="1.2" stroke-linejoin="round"/><path d="M1.4 4.6 H15.6" stroke="#fffbe0" stroke-width="0.9"/><path d="M1.4 11.6 H15.6 M1.4 13.6 H15.6" stroke="#fdf6c4" stroke-width="0.8"/><path d="M10.4 6 L6.6 13.6" stroke="#2f3b4b" stroke-width="1.6"/></svg>
<svg style="position:absolute;left:865px;top:98px" width="20" height="19" viewBox="0 0 20 19" ><path d="M3 8.6 V18.2 H17 V8.6 L10 2.6 Z" fill="url(#gPage)" stroke="#5578a8" stroke-width="1.1"/><rect x="8.1" y="12.9" width="3.8" height="5.6" fill="#2c6bdc"/><path d="M0.8 10.2 L10 1.4 L19.2 10.2" fill="none" stroke="#4a6b96" stroke-width="2.3" stroke-linejoin="miter"/></svg>
<svg style="position:absolute;left:892.6px;top:97.8px" width="18.2" height="20.4" viewBox="0 0 18.2 20.4" ><path d="M0.3 6.7 C2 2.6 5.5 0.6 8.6 0.6 C11 0.6 13.2 1.3 14.7 2.8 L17.5 0.6 L17.7 9.8 L8.4 9.7 L8.4 8.7 L10.4 6.9 C9.6 5.1 7.6 4.5 6 4.6 C4 4.7 2.4 5.7 1.3 7.4 Z" fill="url(#gGreen)" stroke="#178a17" stroke-width="1.1" stroke-linejoin="round"/><g transform="rotate(180 9.05 10.15)"><path d="M0.3 6.7 C2 2.6 5.5 0.6 8.6 0.6 C11 0.6 13.2 1.3 14.7 2.8 L17.5 0.6 L17.7 9.8 L8.4 9.7 L8.4 8.7 L10.4 6.9 C9.6 5.1 7.6 4.5 6 4.6 C4 4.7 2.4 5.7 1.3 7.4 Z" fill="url(#gGreen)" stroke="#178a17" stroke-width="1.1" stroke-linejoin="round"/></g></svg>
<div style="position:absolute;left:920px;top:94px;width:1.3px;height:29px;background:#b6b6b6"></div>
<svg style="position:absolute;left:927px;top:98.6px" width="20.4" height="19.4" viewBox="0 0 20.4 19.4" ><path d="M0.6 0.6 H10.6 L14.6 4.6 V17.400000000000002 H0.6 Z" fill="url(#gPage)" stroke="#4a78b8" stroke-width="1.2" stroke-linejoin="round"/><path d="M10.6 0.6 V4.6 H14.6" fill="none" stroke="#4a78b8" stroke-width="0.96"/><path d="M2.6 3.5 H12.6" stroke="#7da2d8" stroke-width="1"/><path d="M2.6 5.5 H12.6" stroke="#7da2d8" stroke-width="1"/><path d="M2.6 7.5 H12.6" stroke="#7da2d8" stroke-width="1"/><path d="M2.6 9.5 H12.6" stroke="#7da2d8" stroke-width="1"/><path d="M2.6 11.5 H12.6" stroke="#7da2d8" stroke-width="1"/><path d="M2.6 13.5 H12.6" stroke="#7da2d8" stroke-width="1"/><path d="M2.6 15.5 H12.6" stroke="#7da2d8" stroke-width="1"/><circle cx="10.6" cy="10.4" r="5" fill="#e3eefb" fill-opacity="0.85" stroke="#4a525e" stroke-width="1.2"/><path d="M14.4 14.4 L19 18" stroke="#3b4450" stroke-width="2.6" stroke-linecap="round"/></svg>
<span class="t" style="top:98.80px;letter-spacing:-0.364px;color:#000;left:953.73px;">Find Files</span>
<div style="position:absolute;left:1024px;top:94px;width:1.3px;height:29px;background:#b6b6b6"></div>
<svg style="position:absolute;left:1031px;top:98px" width="20.4" height="20.4" viewBox="0 0 20.4 20.4" ><path d="M0.6 8.4 V2.4000000000000004 Q0.6 0.8 2.2 0.8 H3.4 L5.2 2.8000000000000003 H8.6 Q9.6 2.8000000000000003 9.6 3.8000000000000003 V8.4 Z" fill="url(#gFoldT)" stroke="#b8881a" stroke-width="1.2" stroke-linejoin="round"/><path d="M1.4 4.8 H8.799999999999999" stroke="#fffbe0" stroke-width="0.9"/><path d="M10.6 19.4 V13.399999999999999 Q10.6 11.799999999999999 12.2 11.799999999999999 H13.4 L15.2 13.799999999999999 H18.599999999999998 Q19.599999999999998 13.799999999999999 19.599999999999998 14.799999999999999 V19.4 Z" fill="url(#gFoldT)" stroke="#b8881a" stroke-width="1.2" stroke-linejoin="round"/><path d="M11.4 15.799999999999999 H18.8" stroke="#fffbe0" stroke-width="0.9"/><path d="M4.5 10 V15.5 H9.4" fill="none" stroke="#222" stroke-width="1.1" stroke-dasharray="1.1 1.1"/></svg>
<svg style="position:absolute;left:491.5px;top:132px" width="4" height="17" viewBox="0 0 4 17" ><rect x="0" y="0" width="4" height="1" fill="#b3b3b3"/><rect x="0" y="3" width="4" height="1" fill="#b3b3b3"/><rect x="0" y="6" width="4" height="1" fill="#b3b3b3"/><rect x="0" y="9" width="4" height="1" fill="#b3b3b3"/><rect x="0" y="12" width="4" height="1" fill="#b3b3b3"/><rect x="0" y="15" width="4" height="1" fill="#b3b3b3"/></svg>
<svg style="position:absolute;left:501px;top:130px" width="18" height="20" viewBox="0 0 18 20" ><path d="M6.6 0.6 H14.2 L17.4 3.8000000000000003 V14.6 H6.6 Z" fill="#f7f7f7" stroke="#bcbcbc" stroke-width="1.1" stroke-linejoin="round"/><path d="M14.2 0.6 V3.8000000000000003 H17.4" fill="none" stroke="#bcbcbc" stroke-width="0.88"/><path d="M8.6 3.5 H15.399999999999999" stroke="#c4c4c4" stroke-width="1"/><path d="M8.6 5.5 H15.399999999999999" stroke="#c4c4c4" stroke-width="1"/><path d="M8.6 7.5 H15.399999999999999" stroke="#c4c4c4" stroke-width="1"/><path d="M8.6 9.5 H15.399999999999999" stroke="#c4c4c4" stroke-width="1"/><path d="M8.6 11.5 H15.399999999999999" stroke="#c4c4c4" stroke-width="1"/><path d="M0.6 5.6 H10.19 L10.2 5.609999999999999 V19.2 H0.6 Z" fill="#f7f7f7" stroke="#bcbcbc" stroke-width="1.1" stroke-linejoin="round"/><path d="M10.19 5.6 V5.609999999999999 H10.2" fill="none" stroke="#bcbcbc" stroke-width="0.88"/><path d="M2.6 8.5 H8.2" stroke="#c4c4c4" stroke-width="1"/><path d="M2.6 10.5 H8.2" stroke="#c4c4c4" stroke-width="1"/><path d="M2.6 12.5 H8.2" stroke="#c4c4c4" stroke-width="1"/><path d="M2.6 14.5 H8.2" stroke="#c4c4c4" stroke-width="1"/><path d="M2.6 16.5 H8.2" stroke="#c4c4c4" stroke-width="1"/><path d="M8.4 10.4 H17.4 V16.4 H15.4 L17.4 19.4 H9 L10.8 16.4 H8.4 Z" fill="#cbcbcb" stroke="#b8b8b8" stroke-width="0.5"/><path d="M10.2 12.6 L12.4 14.6 L16.4 11" fill="none" stroke="#efefef" stroke-width="1.4"/></svg>
<span class="t" style="top:130.80px;letter-spacing:0.401px;color:#a9a9a9;left:526.53px;">Download</span>
<svg style="position:absolute;left:604.7px;top:139.2px" width="9" height="5" viewBox="0 0 9 5" ><path d="M0 0 H7.4 L3.7 4.144000000000001 Z" fill="#a8a8a8"/></svg>
<div style="position:absolute;left:620px;top:127px;width:1.3px;height:26px;background:#b6b6b6"></div>
<svg style="position:absolute;left:627px;top:130px" width="20" height="19" viewBox="0 0 20 19" ><path d="M0.8 2 H15.4 V18.8 H0.8 Z" fill="#ececec" stroke="#b9b9b9" stroke-width="1.1"/><path d="M17 3.4 L19.6 5.6 L9 16.4 L5.4 17.8 L6.4 14.2 Z" fill="#c6c6c6" stroke="#adadad" stroke-width="0.8" stroke-linejoin="round"/><path d="M5.4 17.8 L6.8 14.8 L8.2 16.2 Z" fill="#a4a4a4"/></svg>
<span class="t" style="top:130.80px;letter-spacing:0.058px;color:#a9a9a9;left:653.53px;">Edit</span>
<svg style="position:absolute;left:688px;top:139.2px" width="9" height="5" viewBox="0 0 9 5" ><path d="M0 0 H7.4 L3.7 4.144000000000001 Z" fill="#a8a8a8"/></svg>
<svg style="position:absolute;left:702.8px;top:131px" width="20" height="18" viewBox="0 0 20 18" ><path d="M2.2 1.2 L17.8 16.8 M17.8 1.2 L2.2 16.8" stroke="#b5b5b5" stroke-width="4.4" stroke-linecap="butt"/></svg>
<svg style="position:absolute;left:731px;top:130px" width="20" height="20" viewBox="0 0 20 20" ><path d="M3.4 1.6 H14 V17 H3.4 Z" fill="#f1f1f1" stroke="#bdbdbd" stroke-width="1.1"/><path d="M0.4 18.6 H13.6" stroke="#bdbdbd" stroke-width="1.1"/><path d="M16.6 1 L19.2 3 L10 15.8 L6.6 17.6 L7.2 13.6 Z" fill="#d0d0d0" stroke="#b2b2b2" stroke-width="0.8" stroke-linejoin="round"/></svg>
<svg style="position:absolute;left:758px;top:130px" width="19" height="20" viewBox="0 0 19 20" ><path d="M0.7 0.9 H9.7 L13.299999999999999 4.5 V16.099999999999998 H0.7 Z" fill="#efefef" stroke="#bdbdbd" stroke-width="1.1" stroke-linejoin="round"/><path d="M9.7 0.9 V4.5 H13.299999999999999" fill="none" stroke="#bdbdbd" stroke-width="0.88"/><rect x="7.9" y="8.8" width="10.4" height="10.4" fill="#f3f3f3" stroke="#bdbdbd" stroke-width="1.2"/><path d="M10 13.6 L12.4 16.6 L16.4 10.6" fill="none" stroke="#c2c2c2" stroke-width="2"/></svg>
<span class="t" style="top:130.80px;letter-spacing:-0.036px;color:#a9a9a9;left:783.23px;">Properties</span>
<div style="position:absolute;left:860px;top:128px;width:1.3px;height:25px;background:#b6b6b6"></div>
<svg style="position:absolute;left:867px;top:130px" width="21" height="19" viewBox="0 0 21 19" ><path d="M0.6 18.2 V5.4 Q0.6 3.8000000000000003 2.2 3.8000000000000003 H5.4 L7.2 5.800000000000001 H15.4 Q16.4 5.800000000000001 16.4 6.800000000000001 V18.2 Z" fill="url(#gFoldT)" stroke="#b8881a" stroke-width="1.2" stroke-linejoin="round"/><path d="M1.4 7.8 H15.6" stroke="#fffbe0" stroke-width="0.9"/><path d="M1.4 14.4 H15.6 M1.4 16.400000000000002 H15.6" stroke="#fdf6c4" stroke-width="0.8"/><path d="M15.40 -0.10 L16.59 2.04 L18.94 1.36 L18.26 3.71 L20.40 4.90 L18.26 6.09 L18.94 8.44 L16.59 7.76 L15.40 9.90 L14.21 7.76 L11.86 8.44 L12.54 6.09 L10.40 4.90 L12.54 3.71 L11.86 1.36 L14.21 2.04 Z" fill="#fff" stroke="#5f8fd8" stroke-width="1" stroke-linejoin="round"/></svg>
<span class="t" style="top:130.80px;letter-spacing:0.591px;color:#000;left:894.33px;">New</span>
<svg style="position:absolute;left:929.8px;top:139.2px" width="9" height="5" viewBox="0 0 9 5" ><path d="M0 0 H7.6 L3.8 4.256 Z" fill="#000"/></svg>
<svg style="position:absolute;left:948px;top:132px" width="4" height="17" viewBox="0 0 4 17" ><rect x="0" y="0" width="4" height="1" fill="#b3b3b3"/><rect x="0" y="3" width="4" height="1" fill="#b3b3b3"/><rect x="0" y="6" width="4" height="1" fill="#b3b3b3"/><rect x="0" y="9" width="4" height="1" fill="#b3b3b3"/><rect x="0" y="12" width="4" height="1" fill="#b3b3b3"/><rect x="0" y="15" width="4" height="1" fill="#b3b3b3"/></svg>
<svg style="position:absolute;left:958px;top:131px" width="18" height="18" viewBox="0 0 18 18" ><rect x="0.7" y="0.7" width="16.6" height="16.4" fill="url(#gBox)" stroke="#4a6fa8" stroke-width="1.3"/><path d="M4 8.9 H14 M9 3.9 V13.9" stroke="#3f6299" stroke-width="2"/></svg>
<svg style="position:absolute;left:985px;top:131px" width="18" height="18" viewBox="0 0 18 18" ><rect x="0.7" y="0.7" width="16.6" height="16.4" fill="#ebebeb" stroke="#c9c9c9" stroke-width="1.3"/><path d="M4 8.9 H14" stroke="#c4c4c4" stroke-width="2"/></svg>
<svg style="position:absolute;left:1012px;top:131px" width="18" height="18" viewBox="0 0 18 18" ><rect x="0.7" y="0.7" width="16.6" height="16.4" fill="url(#gBox)" stroke="#4a6fa8" stroke-width="1.3"/><path d="M4.4 4.6 H13.6 L9 14 Z" fill="none" stroke="#3f6299" stroke-width="2.2" stroke-linejoin="miter"/></svg>
<div style="position:absolute;left:0px;top:155px;width:480px;height:26px;background:#9db7d4;"></div>
<div style="position:absolute;left:0px;top:181px;width:480px;height:1px;background:#74808f;"></div>
<div style="position:absolute;left:487px;top:155px;width:1220px;height:26px;background:#bfccdb;"></div>
<span class="t" style="top:158.80px;letter-spacing:0.415px;color:#000;left:492.30px;">/home/cloudpro/domains/</span>
<span class="t" style="top:158.80px;letter-spacing:0.142px;color:#000;left:672.13px;">demo.cloudpro.vn/public_html/</span>
<div style="position:absolute;left:0px;top:182px;width:479px;height:675px;background:#ffffff;"></div>
<div style="position:absolute;left:479px;top:181px;width:1px;height:676px;background:#828790;"></div>
<div style="position:absolute;left:487px;top:181px;width:1220px;height:676px;background:#ffffff;box-sizing:border-box;border:1px solid #828790;border-bottom:none"></div>
<div style="position:absolute;left:1685px;top:183px;width:20px;height:674px;background:#f0f0f0;"></div>
<div style="position:absolute;left:1692px;top:379px;width:6px;height:293px;background:#8b8b8b;"></div>
<div style="position:absolute;left:490px;top:209px;width:1px;height:648px;background:#c0dbfb;"></div>
<div style="position:absolute;left:74px;top:183px;width:1px;height:26px;background:#e5e5e5;"></div>
<div style="position:absolute;left:74px;top:209px;width:1px;height:648px;background:#edf3fb;"></div>
<div style="position:absolute;left:162px;top:183px;width:1px;height:26px;background:#e5e5e5;"></div>
<div style="position:absolute;left:162px;top:209px;width:1px;height:648px;background:#edf3fb;"></div>
<div style="position:absolute;left:312px;top:183px;width:1px;height:26px;background:#e5e5e5;"></div>
<div style="position:absolute;left:312px;top:209px;width:1px;height:648px;background:#edf3fb;"></div>
<div style="position:absolute;left:870px;top:183px;width:1px;height:26px;background:#e5e5e5;"></div>
<div style="position:absolute;left:870px;top:209px;width:1px;height:648px;background:#edf3fb;"></div>
<div style="position:absolute;left:969px;top:183px;width:1px;height:26px;background:#e5e5e5;"></div>
<div style="position:absolute;left:969px;top:209px;width:1px;height:648px;background:#edf3fb;"></div>
<div style="position:absolute;left:1157px;top:183px;width:1px;height:26px;background:#e5e5e5;"></div>
<div style="position:absolute;left:1157px;top:209px;width:1px;height:648px;background:#edf3fb;"></div>
<div style="position:absolute;left:1256px;top:183px;width:1px;height:26px;background:#e5e5e5;"></div>
<div style="position:absolute;left:1256px;top:209px;width:1px;height:648px;background:#edf3fb;"></div>
<div style="position:absolute;left:1334px;top:183px;width:1px;height:26px;background:#e5e5e5;"></div>
<div style="position:absolute;left:1334px;top:209px;width:1px;height:648px;background:#edf3fb;"></div>
<svg style="position:absolute;left:675px;top:184px" width="10" height="6" viewBox="0 0 10 6" ><path d="M0.4 0.4 L4.6 4.6 L8.8 0.4" fill="none" stroke="#555" stroke-width="1"/></svg>
<span class="t" style="top:187.30px;letter-spacing:-0.734px;color:#000;left:129.83px;">Size</span>
<span class="t" style="top:187.30px;letter-spacing:-0.626px;color:#000;left:168.87px;">Type</span>
<span class="t" style="top:187.30px;letter-spacing:-0.257px;color:#000;left:318.60px;">Changed</span>
<span class="t" style="top:187.30px;letter-spacing:0.256px;color:#000;left:494.33px;">Name</span>
<span class="t" style="top:187.30px;letter-spacing:-0.601px;color:#000;left:937.03px;">Size</span>
<span class="t" style="top:187.30px;letter-spacing:-0.290px;color:#000;left:975.70px;">Changed</span>
<span class="t" style="top:187.30px;letter-spacing:-0.075px;color:#000;left:1163.13px;">Rights</span>
<span class="t" style="top:187.30px;letter-spacing:-0.151px;color:#000;left:1262.30px;">Owner</span>
<span class="t" style="top:212.40px;letter-spacing:-0.139px;color:#000;left:168.60px;">Parent directory</span>
<span class="t" style="top:212.40px;letter-spacing:0.188px;color:#000;left:319.00px;">1/4/2022</span>
<span class="t" style="top:212.40px;letter-spacing:-0.712px;color:#000;left:387.00px;">5:26:34</span>
<span class="t" style="top:212.40px;letter-spacing:-0.850px;color:#000;left:437.00px;">PM</span>
<span class="t" style="top:236.40px;letter-spacing:0.121px;color:#000;left:168.60px;">File folder</span>
<span class="t" style="top:236.40px;letter-spacing:0.122px;color:#000;left:319.00px;">12/1/2021</span>
<span class="t" style="top:236.40px;letter-spacing:-0.659px;color:#000;left:395.00px;">10:07:50</span>
<span class="t" style="top:236.40px;letter-spacing:-0.850px;color:#000;left:453.00px;">PM</span>
<span class="t" style="top:260.40px;letter-spacing:0.121px;color:#000;left:168.60px;">File folder</span>
<span class="t" style="top:260.40px;letter-spacing:0.194px;color:#000;left:319.00px;">11/14/2021</span>
<span class="t" style="top:260.40px;letter-spacing:-0.467px;color:#000;left:403.00px;">11:30:51</span>
<span class="t" style="top:260.40px;letter-spacing:-0.850px;color:#000;left:461.00px;width:18.00px;overflow:hidden;">PM</span>
<span class="t" style="top:284.40px;letter-spacing:0.121px;color:#000;left:168.60px;">File folder</span>
<span class="t" style="top:284.40px;letter-spacing:0.122px;color:#000;left:319.00px;">12/2/2021</span>
<span class="t" style="top:284.40px;letter-spacing:-0.712px;color:#000;left:395.00px;">4:35:00</span>
<span class="t" style="top:284.40px;letter-spacing:-0.850px;color:#000;left:445.00px;">PM</span>
<span class="t" style="top:308.40px;letter-spacing:0.121px;color:#000;left:168.60px;">File folder</span>
<span class="t" style="top:308.40px;letter-spacing:0.194px;color:#000;left:319.00px;">11/14/2021</span>
<span class="t" style="top:308.40px;letter-spacing:-0.467px;color:#000;left:403.00px;">11:30:52</span>
<span class="t" style="top:308.40px;letter-spacing:-0.850px;color:#000;left:461.00px;width:18.00px;overflow:hidden;">PM</span>
<span class="t" style="top:332.40px;letter-spacing:0.121px;color:#000;left:168.60px;">File folder</span>
<span class="t" style="top:332.40px;letter-spacing:0.071px;color:#000;left:319.00px;">12/22/2021</span>
<span class="t" style="top:332.40px;letter-spacing:-0.712px;color:#000;left:403.00px;">9:15:54</span>
<span class="t" style="top:332.40px;letter-spacing:1.111px;color:#000;left:453.00px;">AM</span>
<span class="t" style="top:356.40px;letter-spacing:0.121px;color:#000;left:168.60px;">File folder</span>
<span class="t" style="top:356.40px;letter-spacing:0.194px;color:#000;left:319.00px;">11/23/2021</span>
<span class="t" style="top:356.40px;letter-spacing:-0.673px;color:#000;left:403.00px;">2:43:38</span>
<span class="t" style="top:356.40px;letter-spacing:-0.850px;color:#000;left:453.00px;">PM</span>
<span class="t" style="top:380.40px;letter-spacing:0.121px;color:#000;left:168.60px;">File folder</span>
<span class="t" style="top:380.40px;letter-spacing:0.194px;color:#000;left:319.00px;">11/29/2021</span>
<span class="t" style="top:380.40px;letter-spacing:-0.673px;color:#000;left:403.00px;">9:04:28</span>
<span class="t" style="top:380.40px;letter-spacing:1.111px;color:#000;left:453.00px;">AM</span>
<span class="t" style="top:404.40px;letter-spacing:0.121px;color:#000;left:168.60px;">File folder</span>
<span class="t" style="top:404.40px;letter-spacing:0.188px;color:#000;left:319.00px;">1/4/2022</span>
<span class="t" style="top:404.40px;letter-spacing:-0.673px;color:#000;left:387.00px;">2:17:59</span>
<span class="t" style="top:404.40px;letter-spacing:-0.850px;color:#000;left:437.00px;">PM</span>
<span class="t" style="top:428.40px;letter-spacing:-0.850px;color:#000;right:1552.82px;">KB</span>
<span class="t" style="top:428.40px;letter-spacing:-0.508px;color:#000;right:1575.00px;">258</span>
<span class="t" style="top:428.40px;letter-spacing:-0.676px;color:#000;left:168.60px;">PNG File</span>
<span class="t" style="top:428.40px;letter-spacing:0.071px;color:#000;left:319.00px;">10/10/2021</span>
<span class="t" style="top:428.40px;letter-spacing:-0.673px;color:#000;left:403.00px;">6:58:19</span>
<span class="t" style="top:428.40px;letter-spacing:-0.850px;color:#000;left:453.00px;">PM</span>
<span class="t" style="top:452.40px;letter-spacing:-0.850px;color:#000;right:1552.82px;">KB</span>
<span class="t" style="top:452.40px;letter-spacing:-0.631px;color:#000;right:1575.12px;">2,263</span>
<span class="t" style="top:452.40px;letter-spacing:-0.850px;color:#000;left:168.60px;">JPG File</span>
<span class="t" style="top:452.40px;letter-spacing:0.071px;color:#000;left:319.00px;">12/22/2021</span>
<span class="t" style="top:452.40px;letter-spacing:-0.626px;color:#000;left:403.00px;">10:17:27</span>
<span class="t" style="top:452.40px;letter-spacing:1.111px;color:#000;left:461.00px;width:18.00px;overflow:hidden;">AM</span>
<span class="t" style="top:476.40px;letter-spacing:-0.850px;color:#000;right:1552.82px;">KB</span>
<span class="t" style="top:476.40px;letter-spacing:-0.391px;color:#000;right:1574.88px;">197</span>
<span class="t" style="top:476.40px;letter-spacing:0.049px;color:#000;left:168.60px;">Microsoft Word Do...</span>
<span class="t" style="top:476.40px;letter-spacing:0.122px;color:#000;left:319.00px;">12/6/2021</span>
<span class="t" style="top:476.40px;letter-spacing:-0.626px;color:#000;left:395.00px;">12:37:43</span>
<span class="t" style="top:476.40px;letter-spacing:1.111px;color:#000;left:453.00px;">AM</span>
<span class="t" style="top:500.40px;letter-spacing:-0.850px;color:#000;right:1552.82px;">KB</span>
<span class="t" style="top:500.40px;letter-spacing:-0.690px;color:#000;right:1575.18px;">3,255</span>
<span class="t" style="top:500.40px;letter-spacing:0.049px;color:#000;left:168.60px;">Microsoft Word Do...</span>
<span class="t" style="top:500.40px;letter-spacing:0.071px;color:#000;left:319.00px;">12/22/2021</span>
<span class="t" style="top:500.40px;letter-spacing:-0.712px;color:#000;left:403.00px;">3:21:44</span>
<span class="t" style="top:500.40px;letter-spacing:-0.850px;color:#000;left:453.00px;">PM</span>
<span class="t" style="top:524.40px;letter-spacing:-0.850px;color:#000;right:1552.82px;">KB</span>
<span class="t" style="top:524.40px;letter-spacing:-0.439px;color:#000;right:1574.93px;">16</span>
<span class="t" style="top:524.40px;letter-spacing:-0.162px;color:#000;left:168.60px;">Microsoft Excel Wo...</span>
<span class="t" style="top:524.40px;letter-spacing:0.071px;color:#000;left:319.00px;">12/22/2021</span>
<span class="t" style="top:524.40px;letter-spacing:-0.467px;color:#000;left:403.00px;">11:14:43</span>
<span class="t" style="top:524.40px;letter-spacing:-0.850px;color:#000;left:461.00px;width:18.00px;overflow:hidden;">PM</span>
<span class="t" style="top:548.40px;letter-spacing:-0.850px;color:#000;right:1552.82px;">KB</span>
<span class="t" style="top:548.40px;letter-spacing:-0.674px;color:#000;right:1575.40px;">14</span>
<span class="t" style="top:548.40px;letter-spacing:-0.162px;color:#000;left:168.60px;">Microsoft Excel Wo...</span>
<span class="t" style="top:548.40px;letter-spacing:0.071px;color:#000;left:319.00px;">12/28/2021</span>
<span class="t" style="top:548.40px;letter-spacing:-0.626px;color:#000;left:403.00px;">10:08:45</span>
<span class="t" style="top:548.40px;letter-spacing:1.111px;color:#000;left:461.00px;width:18.00px;overflow:hidden;">AM</span>
<span class="t" style="top:572.40px;letter-spacing:-0.850px;color:#000;right:1552.82px;">KB</span>
<span class="t" style="top:572.40px;letter-spacing:0.000px;color:#000;right:1574.49px;">3</span>
<span class="t" style="top:572.40px;letter-spacing:-0.116px;color:#000;left:168.60px;">Shortcut</span>
<span class="t" style="top:572.40px;letter-spacing:0.188px;color:#000;left:319.00px;">1/4/2022</span>
<span class="t" style="top:572.40px;letter-spacing:-0.659px;color:#000;left:387.00px;">10:56:54</span>
<span class="t" style="top:572.40px;letter-spacing:1.111px;color:#000;left:445.00px;">AM</span>
<span class="t" style="top:596.40px;letter-spacing:-0.850px;color:#000;right:1552.82px;">KB</span>
<span class="t" style="top:596.40px;letter-spacing:-0.439px;color:#000;right:1574.93px;">16</span>
<span class="t" style="top:596.40px;letter-spacing:0.049px;color:#000;left:168.60px;">Microsoft Word Do...</span>
<span class="t" style="top:596.40px;letter-spacing:0.071px;color:#000;left:319.00px;">12/26/2021</span>
<span class="t" style="top:596.40px;letter-spacing:-0.467px;color:#000;left:403.00px;">11:54:07</span>
<span class="t" style="top:596.40px;letter-spacing:-0.850px;color:#000;left:461.00px;width:18.00px;overflow:hidden;">PM</span>
<span class="t" style="top:620.40px;letter-spacing:-0.850px;color:#000;right:1552.82px;">KB</span>
<span class="t" style="top:620.40px;letter-spacing:-0.439px;color:#000;right:1574.93px;">18</span>
<span class="t" style="top:620.40px;letter-spacing:-0.162px;color:#000;left:168.60px;">Microsoft Excel Wo...</span>
<span class="t" style="top:620.40px;letter-spacing:0.071px;color:#000;left:319.00px;">12/29/2021</span>
<span class="t" style="top:620.40px;letter-spacing:-0.712px;color:#000;left:403.00px;">2:28:14</span>
<span class="t" style="top:620.40px;letter-spacing:-0.850px;color:#000;left:453.00px;">PM</span>
<span class="t" style="top:644.40px;letter-spacing:-0.850px;color:#000;right:1552.82px;">KB</span>
<span class="t" style="top:644.40px;letter-spacing:-0.439px;color:#000;right:1574.93px;">15</span>
<span class="t" style="top:644.40px;letter-spacing:0.049px;color:#000;left:168.60px;">Microsoft Word Do...</span>
<span class="t" style="top:644.40px;letter-spacing:0.071px;color:#000;left:319.00px;">12/29/2021</span>
<span class="t" style="top:644.40px;letter-spacing:-0.673px;color:#000;left:403.00px;">8:52:03</span>
<span class="t" style="top:644.40px;letter-spacing:1.111px;color:#000;left:453.00px;">AM</span>
<span class="t" style="top:668.40px;letter-spacing:-0.850px;color:#000;right:1552.82px;">KB</span>
<span class="t" style="top:668.40px;letter-spacing:0.000px;color:#000;right:1574.49px;">2</span>
<span class="t" style="top:668.40px;letter-spacing:-0.116px;color:#000;left:168.60px;">Shortcut</span>
<span class="t" style="top:668.40px;letter-spacing:0.261px;color:#000;left:319.00px;">11/1/2021</span>
<span class="t" style="top:668.40px;letter-spacing:-0.673px;color:#000;left:395.00px;">9:20:49</span>
<span class="t" style="top:668.40px;letter-spacing:1.111px;color:#000;left:445.00px;">AM</span>
<span class="t" style="top:692.40px;letter-spacing:-0.850px;color:#000;right:1552.82px;">KB</span>
<span class="t" style="top:692.40px;letter-spacing:0.000px;color:#000;right:1574.49px;">3</span>
<span class="t" style="top:692.40px;letter-spacing:-0.116px;color:#000;left:168.60px;">Shortcut</span>
<span class="t" style="top:692.40px;letter-spacing:0.071px;color:#000;left:319.00px;">10/30/2021</span>
<span class="t" style="top:692.40px;letter-spacing:-0.488px;color:#000;left:403.00px;">8:16:11</span>
<span class="t" style="top:692.40px;letter-spacing:-0.850px;color:#000;left:453.00px;">PM</span>
<span class="t" style="top:716.40px;letter-spacing:-0.850px;color:#000;right:1552.82px;">KB</span>
<span class="t" style="top:716.40px;letter-spacing:0.000px;color:#000;right:1574.49px;">1</span>
<span class="t" style="top:716.40px;letter-spacing:-0.296px;color:#000;left:168.60px;">Chrome HTML Doc...</span>
<span class="t" style="top:716.40px;letter-spacing:0.188px;color:#000;left:319.00px;">1/4/2022</span>
<span class="t" style="top:716.40px;letter-spacing:-0.673px;color:#000;left:387.00px;">5:26:29</span>
<span class="t" style="top:716.40px;letter-spacing:-0.850px;color:#000;left:437.00px;">PM</span>
<span class="t" style="top:740.40px;letter-spacing:-0.850px;color:#000;right:1552.82px;">KB</span>
<span class="t" style="top:740.40px;letter-spacing:0.000px;color:#000;right:1574.49px;">2</span>
<span class="t" style="top:740.40px;letter-spacing:-0.116px;color:#000;left:168.60px;">Shortcut</span>
<span class="t" style="top:740.40px;letter-spacing:0.071px;color:#000;left:319.00px;">12/20/2021</span>
<span class="t" style="top:740.40px;letter-spacing:-0.712px;color:#000;left:403.00px;">8:45:10</span>
<span class="t" style="top:740.40px;letter-spacing:1.111px;color:#000;left:453.00px;">AM</span>
<span class="t" style="top:500.40px;letter-spacing:-0.762px;color:#000;left:-0.97px;">RM-BRAV...</span>
<span class="t" style="top:716.40px;letter-spacing:-0.850px;color:#000;left:-0.40px;">CKBIknX8...</span>
<div style="position:absolute;left:-1px;top:714px;width:71px;height:20px;border:1px dotted #333"></div>
<svg style="position:absolute;left:494px;top:214px" width="18" height="14" viewBox="0 0 18 14" ><path d="M0 1 Q0 0.2 0.8 0.2 L6.2 0.2 L7.8 2.1 L17.4 2.1 Q18 2.1 18 2.7 L18 13 L0 13 Z" fill="#f6b81c"/><path d="M0 3.7 L18 3.7 L18 13.4 Q18 14 17.4 14 L0.6 14 Q0 14 0 13.4 Z" fill="url(#gFold)"/><path d="M0.3 13.6 H17.7" stroke="#eaae2c" stroke-width="0.8"/></svg>
<span class="t" style="top:212.40px;letter-spacing:-0.093px;color:#000;left:515.00px;">layouts</span>
<span class="t" style="top:212.40px;letter-spacing:0.093px;color:#000;left:976.00px;">5/20/2020</span>
<span class="t" style="top:212.40px;letter-spacing:-0.673px;color:#000;left:1048.00px;">2:49:49</span>
<span class="t" style="top:212.40px;letter-spacing:-0.850px;color:#000;left:1098.00px;">PM</span>
<span class="t" style="top:212.40px;letter-spacing:-0.043px;color:#000;left:1163.36px;">rwxrwxrwx</span>
<span class="t" style="top:212.40px;letter-spacing:0.348px;color:#000;left:1263.13px;">cloudpro</span>
<svg style="position:absolute;left:494px;top:238px" width="18" height="14" viewBox="0 0 18 14" ><path d="M0 1 Q0 0.2 0.8 0.2 L6.2 0.2 L7.8 2.1 L17.4 2.1 Q18 2.1 18 2.7 L18 13 L0 13 Z" fill="#f6b81c"/><path d="M0 3.7 L18 3.7 L18 13.4 Q18 14 17.4 14 L0.6 14 Q0 14 0 13.4 Z" fill="url(#gFold)"/><path d="M0.3 13.6 H17.7" stroke="#eaae2c" stroke-width="0.8"/></svg>
<span class="t" style="top:236.40px;letter-spacing:-0.322px;color:#000;left:515.00px;">languages_bk</span>
<span class="t" style="top:236.40px;letter-spacing:0.122px;color:#000;left:976.00px;">8/20/2021</span>
<span class="t" style="top:236.40px;letter-spacing:-0.673px;color:#000;left:1048.00px;">3:38:27</span>
<span class="t" style="top:236.40px;letter-spacing:-0.850px;color:#000;left:1098.00px;">PM</span>
<span class="t" style="top:236.40px;letter-spacing:0.154px;color:#000;left:1163.36px;">rwxr-xr-x</span>
<span class="t" style="top:236.40px;letter-spacing:0.348px;color:#000;left:1263.13px;">cloudpro</span>
<svg style="position:absolute;left:494px;top:262px" width="18" height="14" viewBox="0 0 18 14" ><path d="M0 1 Q0 0.2 0.8 0.2 L6.2 0.2 L7.8 2.1 L17.4 2.1 Q18 2.1 18 2.7 L18 13 L0 13 Z" fill="#f6b81c"/><path d="M0 3.7 L18 3.7 L18 13.4 Q18 14 17.4 14 L0.6 14 Q0 14 0 13.4 Z" fill="url(#gFold)"/><path d="M0.3 13.6 H17.7" stroke="#eaae2c" stroke-width="0.8"/></svg>
<span class="t" style="top:260.40px;letter-spacing:-0.145px;color:#000;left:515.00px;">languages</span>
<span class="t" style="top:260.40px;letter-spacing:0.071px;color:#000;left:976.00px;">10/26/2021</span>
<span class="t" style="top:260.40px;letter-spacing:-0.712px;color:#000;left:1056.00px;">3:45:14</span>
<span class="t" style="top:260.40px;letter-spacing:-0.850px;color:#000;left:1106.00px;">PM</span>
<span class="t" style="top:260.40px;letter-spacing:-0.043px;color:#000;left:1163.36px;">rwxrwxrwx</span>
<span class="t" style="top:260.40px;letter-spacing:0.348px;color:#000;left:1263.13px;">cloudpro</span>
<svg style="position:absolute;left:494px;top:286px" width="18" height="14" viewBox="0 0 18 14" ><path d="M0 1 Q0 0.2 0.8 0.2 L6.2 0.2 L7.8 2.1 L17.4 2.1 Q18 2.1 18 2.7 L18 13 L0 13 Z" fill="#f6b81c"/><path d="M0 3.7 L18 3.7 L18 13.4 Q18 14 17.4 14 L0.6 14 Q0 14 0 13.4 Z" fill="url(#gFold)"/><path d="M0.3 13.6 H17.7" stroke="#eaae2c" stroke-width="0.8"/></svg>
<span class="t" style="top:284.40px;letter-spacing:0.007px;color:#000;left:515.00px;">kcfinder</span>
<span class="t" style="top:284.40px;letter-spacing:0.122px;color:#000;left:976.00px;">8/20/2021</span>
<span class="t" style="top:284.40px;letter-spacing:-0.673px;color:#000;left:1048.00px;">3:38:27</span>
<span class="t" style="top:284.40px;letter-spacing:-0.850px;color:#000;left:1098.00px;">PM</span>
<span class="t" style="top:284.40px;letter-spacing:0.154px;color:#000;left:1163.36px;">rwxr-xr-x</span>
<span class="t" style="top:284.40px;letter-spacing:0.348px;color:#000;left:1263.13px;">cloudpro</span>
<svg style="position:absolute;left:494px;top:310px" width="18" height="14" viewBox="0 0 18 14" ><path d="M0 1 Q0 0.2 0.8 0.2 L6.2 0.2 L7.8 2.1 L17.4 2.1 Q18 2.1 18 2.7 L18 13 L0 13 Z" fill="#f6b81c"/><path d="M0 3.7 L18 3.7 L18 13.4 Q18 14 17.4 14 L0.6 14 Q0 14 0 13.4 Z" fill="url(#gFold)"/><path d="M0.3 13.6 H17.7" stroke="#eaae2c" stroke-width="0.8"/></svg>
<span class="t" style="top:308.40px;letter-spacing:-0.081px;color:#000;left:515.00px;">includes</span>
<span class="t" style="top:308.40px;letter-spacing:0.122px;color:#000;left:976.00px;">8/20/2021</span>
<span class="t" style="top:308.40px;letter-spacing:-0.673px;color:#000;left:1048.00px;">3:38:27</span>
<span class="t" style="top:308.40px;letter-spacing:-0.850px;color:#000;left:1098.00px;">PM</span>
<span class="t" style="top:308.40px;letter-spacing:-0.043px;color:#000;left:1163.36px;">rwxrwxrwx</span>
<span class="t" style="top:308.40px;letter-spacing:0.348px;color:#000;left:1263.13px;">cloudpro</span>
<svg style="position:absolute;left:494px;top:334px" width="18" height="14" viewBox="0 0 18 14" ><path d="M0 1 Q0 0.2 0.8 0.2 L6.2 0.2 L7.8 2.1 L17.4 2.1 Q18 2.1 18 2.7 L18 13 L0 13 Z" fill="#f6b81c"/><path d="M0 3.7 L18 3.7 L18 13.4 Q18 14 17.4 14 L0.6 14 Q0 14 0 13.4 Z" fill="url(#gFold)"/><path d="M0.3 13.6 H17.7" stroke="#eaae2c" stroke-width="0.8"/></svg>
<span class="t" style="top:332.40px;letter-spacing:0.096px;color:#000;left:515.00px;">include</span>
<span class="t" style="top:332.40px;letter-spacing:0.122px;color:#000;left:976.00px;">8/20/2021</span>
<span class="t" style="top:332.40px;letter-spacing:-0.673px;color:#000;left:1048.00px;">3:38:27</span>
<span class="t" style="top:332.40px;letter-spacing:-0.850px;color:#000;left:1098.00px;">PM</span>
<span class="t" style="top:332.40px;letter-spacing:0.154px;color:#000;left:1163.36px;">rwxr-xr-x</span>
<span class="t" style="top:332.40px;letter-spacing:0.348px;color:#000;left:1263.13px;">cloudpro</span>
<svg style="position:absolute;left:494px;top:358px" width="18" height="14" viewBox="0 0 18 14" ><path d="M0 1 Q0 0.2 0.8 0.2 L6.2 0.2 L7.8 2.1 L17.4 2.1 Q18 2.1 18 2.7 L18 13 L0 13 Z" fill="#f6b81c"/><path d="M0 3.7 L18 3.7 L18 13.4 Q18 14 17.4 14 L0.6 14 Q0 14 0 13.4 Z" fill="url(#gFold)"/><path d="M0.3 13.6 H17.7" stroke="#eaae2c" stroke-width="0.8"/></svg>
<span class="t" style="top:356.40px;letter-spacing:-0.097px;color:#000;left:515.00px;">data</span>
<span class="t" style="top:356.40px;letter-spacing:0.122px;color:#000;left:976.00px;">8/20/2021</span>
<span class="t" style="top:356.40px;letter-spacing:-0.673px;color:#000;left:1048.00px;">3:38:27</span>
<span class="t" style="top:356.40px;letter-spacing:-0.850px;color:#000;left:1098.00px;">PM</span>
<span class="t" style="top:356.40px;letter-spacing:0.154px;color:#000;left:1163.36px;">rwxr-xr-x</span>
<span class="t" style="top:356.40px;letter-spacing:0.348px;color:#000;left:1263.13px;">cloudpro</span>
<svg style="position:absolute;left:494px;top:382px" width="18" height="14" viewBox="0 0 18 14" ><path d="M0 1 Q0 0.2 0.8 0.2 L6.2 0.2 L7.8 2.1 L17.4 2.1 Q18 2.1 18 2.7 L18 13 L0 13 Z" fill="#f6b81c"/><path d="M0 3.7 L18 3.7 L18 13.4 Q18 14 17.4 14 L0.6 14 Q0 14 0 13.4 Z" fill="url(#gFold)"/><path d="M0.3 13.6 H17.7" stroke="#eaae2c" stroke-width="0.8"/></svg>
<span class="t" style="top:380.40px;letter-spacing:0.221px;color:#000;left:515.00px;">cron</span>
<span class="t" style="top:380.40px;letter-spacing:0.122px;color:#000;left:976.00px;">8/20/2021</span>
<span class="t" style="top:380.40px;letter-spacing:-0.673px;color:#000;left:1048.00px;">3:38:27</span>
<span class="t" style="top:380.40px;letter-spacing:-0.850px;color:#000;left:1098.00px;">PM</span>
<span class="t" style="top:380.40px;letter-spacing:0.154px;color:#000;left:1163.36px;">rwxr-xr-x</span>
<span class="t" style="top:380.40px;letter-spacing:0.348px;color:#000;left:1263.13px;">cloudpro</span>
<svg style="position:absolute;left:494px;top:406px" width="18" height="14" viewBox="0 0 18 14" ><path d="M0 1 Q0 0.2 0.8 0.2 L6.2 0.2 L7.8 2.1 L17.4 2.1 Q18 2.1 18 2.7 L18 13 L0 13 Z" fill="#f6b81c"/><path d="M0 3.7 L18 3.7 L18 13.4 Q18 14 17.4 14 L0.6 14 Q0 14 0 13.4 Z" fill="url(#gFold)"/><path d="M0.3 13.6 H17.7" stroke="#eaae2c" stroke-width="0.8"/></svg>
<span class="t" style="top:404.40px;letter-spacing:-0.480px;color:#000;left:515.00px;">cache</span>
<span class="t" style="top:404.40px;letter-spacing:0.122px;color:#000;left:976.00px;">12/1/2021</span>
<span class="t" style="top:404.40px;letter-spacing:-0.712px;color:#000;left:1048.00px;">4:14:50</span>
<span class="t" style="top:404.40px;letter-spacing:-0.850px;color:#000;left:1098.00px;">PM</span>
<span class="t" style="top:404.40px;letter-spacing:-0.043px;color:#000;left:1163.36px;">rwxrwxrwx</span>
<span class="t" style="top:404.40px;letter-spacing:0.348px;color:#000;left:1263.13px;">cloudpro</span>
<svg style="position:absolute;left:494px;top:430px" width="18" height="14" viewBox="0 0 18 14" ><path d="M0 1 Q0 0.2 0.8 0.2 L6.2 0.2 L7.8 2.1 L17.4 2.1 Q18 2.1 18 2.7 L18 13 L0 13 Z" fill="#f6b81c"/><path d="M0 3.7 L18 3.7 L18 13.4 Q18 14 17.4 14 L0.6 14 Q0 14 0 13.4 Z" fill="url(#gFold)"/><path d="M0.3 13.6 H17.7" stroke="#eaae2c" stroke-width="0.8"/></svg>
<span class="t" style="top:428.40px;letter-spacing:0.486px;color:#000;left:515.00px;">api</span>
<span class="t" style="top:428.40px;letter-spacing:0.122px;color:#000;left:976.00px;">8/20/2021</span>
<span class="t" style="top:428.40px;letter-spacing:-0.673px;color:#000;left:1048.00px;">3:38:27</span>
<span class="t" style="top:428.40px;letter-spacing:-0.850px;color:#000;left:1098.00px;">PM</span>
<span class="t" style="top:428.40px;letter-spacing:0.154px;color:#000;left:1163.36px;">rwxr-xr-x</span>
<span class="t" style="top:428.40px;letter-spacing:0.348px;color:#000;left:1263.13px;">cloudpro</span>
<svg style="position:absolute;left:493.6px;top:451.8px" width="19" height="19" viewBox="0 0 19 19" ><circle cx="9.5" cy="9.5" r="9.3" fill="#fff"/><path d="M9.5 9.5 L1.45 4.85 A9.3 9.3 0 0 1 17.55 4.85 Z" fill="#dd4b3e"/><path d="M9.5 9.5 L17.55 4.85 A9.3 9.3 0 0 1 7.89 18.66 Z" fill="#fdc93b"/><path d="M9.5 9.5 L7.89 18.66 A9.3 9.3 0 0 1 1.45 4.85 Z" fill="#1ea362"/><path d="M1.45 4.85 A9.3 9.3 0 0 1 17.55 4.85 L13.14 5.10 L9.5 5.10 Z" fill="#dd4b3e"/><path d="M17.55 4.85 A9.3 9.3 0 0 1 7.89 18.66 L10.10 13.80 L13.50 7.90 L13.40 5.10 L18.00 5.72 Z" fill="#fdc93b"/><path d="M7.89 18.66 A9.3 9.3 0 0 1 1.45 4.85 L5.60 7.50 L5.70 11.70 L9.90 13.90 Z" fill="#1ea362"/><circle cx="9.5" cy="9.5" r="4.5" fill="#fff"/><circle cx="9.5" cy="9.5" r="3.6" fill="#4688f1"/></svg>
<span class="t" style="top:452.40px;letter-spacing:-0.539px;color:#000;left:515.00px;">zalo_verifierO-UPDRRCJ2jEtCKBIknX87pXzWEGb2T...</span>
<span class="t" style="top:452.40px;letter-spacing:-0.850px;color:#000;right:746.22px;">KB</span>
<span class="t" style="top:452.40px;letter-spacing:0.000px;color:#000;right:767.89px;">1</span>
<span class="t" style="top:452.40px;letter-spacing:0.188px;color:#000;left:976.00px;">1/4/2022</span>
<span class="t" style="top:452.40px;letter-spacing:-0.673px;color:#000;left:1040.00px;">5:26:29</span>
<span class="t" style="top:452.40px;letter-spacing:-0.850px;color:#000;left:1090.00px;">PM</span>
<span class="t" style="top:452.40px;letter-spacing:0.736px;color:#000;left:1163.36px;">rw-r--r--</span>
<span class="t" style="top:452.40px;letter-spacing:0.880px;color:#000;left:1262.66px;">root</span>
<svg style="position:absolute;left:494px;top:475px" width="18" height="20" viewBox="0 0 18 20" ><path d="M1.6 0.8 L11.4 0.8 L16.4 5.8 L16.4 19.2 L1.6 19.2 Z" fill="#f9f9f9" stroke="#7e7e7e" stroke-width="1.2" stroke-linejoin="round"/><path d="M11.4 0.8 L11.4 5.8 L16.4 5.8" fill="#fff" stroke="#7e7e7e" stroke-width="1" stroke-linejoin="round"/></svg>
<span class="t" style="top:476.40px;letter-spacing:-0.163px;color:#000;left:515.00px;">webservice.php</span>
<span class="t" style="top:476.40px;letter-spacing:-0.850px;color:#000;right:746.22px;">KB</span>
<span class="t" style="top:476.40px;letter-spacing:0.000px;color:#000;right:767.89px;">5</span>
<span class="t" style="top:476.40px;letter-spacing:0.122px;color:#000;left:976.00px;">4/13/2021</span>
<span class="t" style="top:476.40px;letter-spacing:-0.626px;color:#000;left:1048.00px;">10:55:52</span>
<span class="t" style="top:476.40px;letter-spacing:1.111px;color:#000;left:1106.00px;">AM</span>
<span class="t" style="top:476.40px;letter-spacing:0.736px;color:#000;left:1163.36px;">rw-r--r--</span>
<span class="t" style="top:476.40px;letter-spacing:0.348px;color:#000;left:1263.13px;">cloudpro</span>
<svg style="position:absolute;left:494px;top:499px" width="18" height="20" viewBox="0 0 18 20" ><path d="M1.6 0.8 L11.4 0.8 L16.4 5.8 L16.4 19.2 L1.6 19.2 Z" fill="#f9f9f9" stroke="#7e7e7e" stroke-width="1.2" stroke-linejoin="round"/><path d="M11.4 0.8 L11.4 5.8 L16.4 5.8" fill="#fff" stroke="#7e7e7e" stroke-width="1" stroke-linejoin="round"/></svg>
<span class="t" style="top:500.40px;letter-spacing:0.067px;color:#000;left:515.00px;">webhook.php</span>
<span class="t" style="top:500.40px;letter-spacing:-0.850px;color:#000;right:746.22px;">KB</span>
<span class="t" style="top:500.40px;letter-spacing:0.000px;color:#000;right:767.89px;">2</span>
<span class="t" style="top:500.40px;letter-spacing:0.122px;color:#000;left:976.00px;">8/18/2021</span>
<span class="t" style="top:500.40px;letter-spacing:-0.500px;color:#000;left:1048.00px;">11:57:14</span>
<span class="t" style="top:500.40px;letter-spacing:1.111px;color:#000;left:1106.00px;">AM</span>
<span class="t" style="top:500.40px;letter-spacing:0.736px;color:#000;left:1163.36px;">rw-r--r--</span>
<span class="t" style="top:500.40px;letter-spacing:0.348px;color:#000;left:1263.13px;">cloudpro</span>
<svg style="position:absolute;left:494px;top:523px" width="18" height="20" viewBox="0 0 18 20" ><path d="M1.6 0.8 L11.4 0.8 L16.4 5.8 L16.4 19.2 L1.6 19.2 Z" fill="#f9f9f9" stroke="#7e7e7e" stroke-width="1.2" stroke-linejoin="round"/><path d="M11.4 0.8 L11.4 5.8 L16.4 5.8" fill="#fff" stroke="#7e7e7e" stroke-width="1" stroke-linejoin="round"/></svg>
<span class="t" style="top:524.40px;letter-spacing:-0.020px;color:#000;left:515.00px;">vtigerversion.php</span>
<span class="t" style="top:524.40px;letter-spacing:-0.850px;color:#000;right:746.22px;">KB</span>
<span class="t" style="top:524.40px;letter-spacing:0.000px;color:#000;right:767.89px;">1</span>
<span class="t" style="top:524.40px;letter-spacing:0.071px;color:#000;left:976.00px;">10/14/2021</span>
<span class="t" style="top:524.40px;letter-spacing:-0.712px;color:#000;left:1056.00px;">2:39:40</span>
<span class="t" style="top:524.40px;letter-spacing:-0.850px;color:#000;left:1106.00px;">PM</span>
<span class="t" style="top:524.40px;letter-spacing:0.736px;color:#000;left:1163.36px;">rw-r--r--</span>
<span class="t" style="top:524.40px;letter-spacing:0.348px;color:#000;left:1263.13px;">cloudpro</span>
<svg style="position:absolute;left:494px;top:547px" width="18" height="20" viewBox="0 0 18 20" ><path d="M1.6 0.8 L11.4 0.8 L16.4 5.8 L16.4 19.2 L1.6 19.2 Z" fill="#f9f9f9" stroke="#7e7e7e" stroke-width="1.2" stroke-linejoin="round"/><path d="M11.4 0.8 L11.4 5.8 L16.4 5.8" fill="#fff" stroke="#7e7e7e" stroke-width="1" stroke-linejoin="round"/></svg>
<span class="t" style="top:548.40px;letter-spacing:-0.080px;color:#000;left:515.00px;">vtigerservice.php</span>
<span class="t" style="top:548.40px;letter-spacing:-0.850px;color:#000;right:746.22px;">KB</span>
<span class="t" style="top:548.40px;letter-spacing:0.000px;color:#000;right:767.89px;">2</span>
<span class="t" style="top:548.40px;letter-spacing:0.122px;color:#000;left:976.00px;">4/13/2021</span>
<span class="t" style="top:548.40px;letter-spacing:-0.626px;color:#000;left:1048.00px;">10:55:52</span>
<span class="t" style="top:548.40px;letter-spacing:1.111px;color:#000;left:1106.00px;">AM</span>
<span class="t" style="top:548.40px;letter-spacing:0.736px;color:#000;left:1163.36px;">rw-r--r--</span>
<span class="t" style="top:548.40px;letter-spacing:0.348px;color:#000;left:1263.13px;">cloudpro</span>
<svg style="position:absolute;left:494px;top:571px" width="18" height="20" viewBox="0 0 18 20" ><path d="M1.6 0.8 L11.4 0.8 L16.4 5.8 L16.4 19.2 L1.6 19.2 Z" fill="#f9f9f9" stroke="#7e7e7e" stroke-width="1.2" stroke-linejoin="round"/><path d="M11.4 0.8 L11.4 5.8 L16.4 5.8" fill="#fff" stroke="#7e7e7e" stroke-width="1" stroke-linejoin="round"/></svg>
<span class="t" style="top:572.40px;letter-spacing:0.073px;color:#000;left:515.00px;">vtigercron.php</span>
<span class="t" style="top:572.40px;letter-spacing:-0.850px;color:#000;right:746.22px;">KB</span>
<span class="t" style="top:572.40px;letter-spacing:0.000px;color:#000;right:767.89px;">5</span>
<span class="t" style="top:572.40px;letter-spacing:0.122px;color:#000;left:976.00px;">8/18/2021</span>
<span class="t" style="top:572.40px;letter-spacing:-0.500px;color:#000;left:1048.00px;">11:57:14</span>
<span class="t" style="top:572.40px;letter-spacing:1.111px;color:#000;left:1106.00px;">AM</span>
<span class="t" style="top:572.40px;letter-spacing:0.736px;color:#000;left:1163.36px;">rw-r--r--</span>
<span class="t" style="top:572.40px;letter-spacing:0.348px;color:#000;left:1263.13px;">cloudpro</span>
<svg style="position:absolute;left:494px;top:595px" width="18" height="20" viewBox="0 0 18 20" ><path d="M1.6 0.8 L11.4 0.8 L16.4 5.8 L16.4 19.2 L1.6 19.2 Z" fill="#f9f9f9" stroke="#7e7e7e" stroke-width="1.2" stroke-linejoin="round"/><path d="M11.4 0.8 L11.4 5.8 L16.4 5.8" fill="#fff" stroke="#7e7e7e" stroke-width="1" stroke-linejoin="round"/></svg>
<span class="t" style="top:596.40px;letter-spacing:0.177px;color:#000;left:515.00px;">tabdata.php</span>
<span class="t" style="top:596.40px;letter-spacing:-0.850px;color:#000;right:746.22px;">KB</span>
<span class="t" style="top:596.40px;letter-spacing:0.000px;color:#000;right:768.13px;">4</span>
<span class="t" style="top:596.40px;letter-spacing:0.071px;color:#000;left:976.00px;">10/30/2021</span>
<span class="t" style="top:596.40px;letter-spacing:-0.626px;color:#000;left:1056.00px;">10:36:03</span>
<span class="t" style="top:596.40px;letter-spacing:1.111px;color:#000;left:1114.00px;">AM</span>
<span class="t" style="top:596.40px;letter-spacing:-0.043px;color:#000;left:1163.36px;">rwxrwxrwx</span>
<span class="t" style="top:596.40px;letter-spacing:0.348px;color:#000;left:1263.13px;">cloudpro</span>
<svg style="position:absolute;left:494px;top:620px" width="17" height="18" viewBox="0 0 17 18" ><path d="M2.7 0.6 L12.2 0.6 L15.5 3.9 L15.5 17.4 L2.7 17.4 Z" fill="#fdfdfd" stroke="#8a8a8a" stroke-width="1.1"/><path d="M12.2 0.6 L12.2 3.9 L15.5 3.9" fill="none" stroke="#8a8a8a" stroke-width="0.9"/><path d="M4.6 3.5 H11" stroke="#9a9a9a" stroke-width="0.9"/><path d="M4.6 5.5 H13.6" stroke="#9a9a9a" stroke-width="0.9"/><path d="M4.6 7.5 H13.6" stroke="#9a9a9a" stroke-width="0.9"/><path d="M4.6 9.5 H13.6" stroke="#9a9a9a" stroke-width="0.9"/><path d="M4.6 11.5 H13.6" stroke="#9a9a9a" stroke-width="0.9"/><path d="M4.6 13.5 H13.6" stroke="#9a9a9a" stroke-width="0.9"/><path d="M4.6 15.5 H13.6" stroke="#dcdcdc" stroke-width="0.9"/></svg>
<span class="t" style="top:620.40px;letter-spacing:-0.680px;color:#000;left:515.00px;">SPL-1.1.2.txt</span>
<span class="t" style="top:620.40px;letter-spacing:-0.850px;color:#000;right:746.22px;">KB</span>
<span class="t" style="top:620.40px;letter-spacing:-0.850px;color:#000;right:768.98px;">24</span>
<span class="t" style="top:620.40px;letter-spacing:0.122px;color:#000;left:976.00px;">4/13/2021</span>
<span class="t" style="top:620.40px;letter-spacing:-0.626px;color:#000;left:1048.00px;">10:55:51</span>
<span class="t" style="top:620.40px;letter-spacing:1.111px;color:#000;left:1106.00px;">AM</span>
<span class="t" style="top:620.40px;letter-spacing:0.736px;color:#000;left:1163.36px;">rw-r--r--</span>
<span class="t" style="top:620.40px;letter-spacing:0.348px;color:#000;left:1263.13px;">cloudpro</span>
<svg style="position:absolute;left:494px;top:643px" width="18" height="20" viewBox="0 0 18 20" ><path d="M1.6 0.8 L11.4 0.8 L16.4 5.8 L16.4 19.2 L1.6 19.2 Z" fill="#f9f9f9" stroke="#7e7e7e" stroke-width="1.2" stroke-linejoin="round"/><path d="M11.4 0.8 L11.4 5.8 L16.4 5.8" fill="#fff" stroke="#7e7e7e" stroke-width="1" stroke-linejoin="round"/></svg>
<span class="t" style="top:644.40px;letter-spacing:-0.028px;color:#000;left:515.00px;">shorturl.php</span>
<span class="t" style="top:644.40px;letter-spacing:-0.850px;color:#000;right:746.22px;">KB</span>
<span class="t" style="top:644.40px;letter-spacing:0.000px;color:#000;right:767.89px;">1</span>
<span class="t" style="top:644.40px;letter-spacing:0.122px;color:#000;left:976.00px;">4/13/2021</span>
<span class="t" style="top:644.40px;letter-spacing:-0.626px;color:#000;left:1048.00px;">10:55:52</span>
<span class="t" style="top:644.40px;letter-spacing:1.111px;color:#000;left:1106.00px;">AM</span>
<span class="t" style="top:644.40px;letter-spacing:0.736px;color:#000;left:1163.36px;">rw-r--r--</span>
<span class="t" style="top:644.40px;letter-spacing:0.348px;color:#000;left:1263.13px;">cloudpro</span>
<svg style="position:absolute;left:494.4px;top:667px" width="18" height="20" viewBox="0 0 18 20" ><path d="M1.5 0.8 L12.4 0.8 L17 5.4 L17 19.2 L1.5 19.2 Z" fill="#fff" stroke="#6a6a6a" stroke-width="1" stroke-linejoin="round"/><path d="M17 5.4 L17 19.3 L1.5 19.3" fill="none" stroke="#333" stroke-width="1.4"/><path d="M12.4 0.8 L12.4 5.4 L17 5.4" fill="#eee" stroke="#6a6a6a" stroke-width="0.9" stroke-linejoin="round"/><path d="M13.4 6.2 C10.6 3.6 5 4 5.2 7 C5.4 9.8 11.8 10.2 12 13.2 C12.2 15.8 8 16 4.4 15.4" fill="none" stroke="#8a8820" stroke-width="4.2" stroke-linecap="round"/><path d="M13.4 6.2 C10.6 3.6 5 4 5.2 7 C5.4 9.8 11.8 10.2 12 13.2 C12.2 15.8 8 16 4.4 15.4" fill="none" stroke="#e9e32e" stroke-width="2.8" stroke-linecap="round"/><path d="M10 5.4 L14.8 4.4 L13 7.6 Z" fill="#6f6f6f"/><path d="M4.2 14.6 H9.8 V17.2 H4.2 Z" fill="#bdbdb4" stroke="#8a8a80" stroke-width="0.5"/><path d="M4.8 13.6 H8.4" stroke="#fffef0" stroke-width="1.2"/></svg>
<span class="t" style="top:668.40px;letter-spacing:-0.151px;color:#000;left:515.00px;">service-worker.js</span>
<span class="t" style="top:668.40px;letter-spacing:-0.850px;color:#000;right:746.22px;">KB</span>
<span class="t" style="top:668.40px;letter-spacing:0.000px;color:#000;right:767.89px;">1</span>
<span class="t" style="top:668.40px;letter-spacing:0.122px;color:#000;left:976.00px;">4/13/2021</span>
<span class="t" style="top:668.40px;letter-spacing:-0.626px;color:#000;left:1048.00px;">10:55:52</span>
<span class="t" style="top:668.40px;letter-spacing:1.111px;color:#000;left:1106.00px;">AM</span>
<span class="t" style="top:668.40px;letter-spacing:0.736px;color:#000;left:1163.36px;">rw-r--r--</span>
<span class="t" style="top:668.40px;letter-spacing:0.348px;color:#000;left:1263.13px;">cloudpro</span>
<svg style="position:absolute;left:494px;top:691px" width="18" height="20" viewBox="0 0 18 20" ><path d="M1.6 0.8 L11.4 0.8 L16.4 5.8 L16.4 19.2 L1.6 19.2 Z" fill="#f9f9f9" stroke="#7e7e7e" stroke-width="1.2" stroke-linejoin="round"/><path d="M11.4 0.8 L11.4 5.8 L16.4 5.8" fill="#fff" stroke="#7e7e7e" stroke-width="1" stroke-linejoin="round"/></svg>
<span class="t" style="top:692.40px;letter-spacing:0.117px;color:#000;left:515.00px;">SendSupportNotification.php</span>
<span class="t" style="top:692.40px;letter-spacing:-0.850px;color:#000;right:746.22px;">KB</span>
<span class="t" style="top:692.40px;letter-spacing:0.000px;color:#000;right:767.89px;">5</span>
<span class="t" style="top:692.40px;letter-spacing:0.122px;color:#000;left:976.00px;">4/13/2021</span>
<span class="t" style="top:692.40px;letter-spacing:-0.626px;color:#000;left:1048.00px;">10:55:51</span>
<span class="t" style="top:692.40px;letter-spacing:1.111px;color:#000;left:1106.00px;">AM</span>
<span class="t" style="top:692.40px;letter-spacing:0.736px;color:#000;left:1163.36px;">rw-r--r--</span>
<span class="t" style="top:692.40px;letter-spacing:0.348px;color:#000;left:1263.13px;">cloudpro</span>
<svg style="position:absolute;left:494px;top:716px" width="17" height="18" viewBox="0 0 17 18" ><path d="M2.7 0.6 L12.2 0.6 L15.5 3.9 L15.5 17.4 L2.7 17.4 Z" fill="#fdfdfd" stroke="#8a8a8a" stroke-width="1.1"/><path d="M12.2 0.6 L12.2 3.9 L15.5 3.9" fill="none" stroke="#8a8a8a" stroke-width="0.9"/><path d="M4.6 3.5 H11" stroke="#9a9a9a" stroke-width="0.9"/><path d="M4.6 5.5 H13.6" stroke="#9a9a9a" stroke-width="0.9"/><path d="M4.6 7.5 H13.6" stroke="#9a9a9a" stroke-width="0.9"/><path d="M4.6 9.5 H13.6" stroke="#9a9a9a" stroke-width="0.9"/><path d="M4.6 11.5 H13.6" stroke="#9a9a9a" stroke-width="0.9"/><path d="M4.6 13.5 H13.6" stroke="#9a9a9a" stroke-width="0.9"/><path d="M4.6 15.5 H13.6" stroke="#dcdcdc" stroke-width="0.9"/></svg>
<span class="t" style="top:716.40px;letter-spacing:0.117px;color:#000;left:515.00px;">robots.txt</span>
<span class="t" style="top:716.40px;letter-spacing:-0.850px;color:#000;right:746.22px;">KB</span>
<span class="t" style="top:716.40px;letter-spacing:0.000px;color:#000;right:767.89px;">1</span>
<span class="t" style="top:716.40px;letter-spacing:0.122px;color:#000;left:976.00px;">4/13/2021</span>
<span class="t" style="top:716.40px;letter-spacing:-0.626px;color:#000;left:1048.00px;">10:55:52</span>
<span class="t" style="top:716.40px;letter-spacing:1.111px;color:#000;left:1106.00px;">AM</span>
<span class="t" style="top:716.40px;letter-spacing:0.736px;color:#000;left:1163.36px;">rw-r--r--</span>
<span class="t" style="top:716.40px;letter-spacing:0.348px;color:#000;left:1263.13px;">cloudpro</span>
<svg style="position:absolute;left:493.6px;top:739.8px" width="19" height="19" viewBox="0 0 19 19" ><circle cx="9.5" cy="9.5" r="9.3" fill="#fff"/><path d="M9.5 9.5 L1.45 4.85 A9.3 9.3 0 0 1 17.55 4.85 Z" fill="#dd4b3e"/><path d="M9.5 9.5 L17.55 4.85 A9.3 9.3 0 0 1 7.89 18.66 Z" fill="#fdc93b"/><path d="M9.5 9.5 L7.89 18.66 A9.3 9.3 0 0 1 1.45 4.85 Z" fill="#1ea362"/><path d="M1.45 4.85 A9.3 9.3 0 0 1 17.55 4.85 L13.14 5.10 L9.5 5.10 Z" fill="#dd4b3e"/><path d="M17.55 4.85 A9.3 9.3 0 0 1 7.89 18.66 L10.10 13.80 L13.50 7.90 L13.40 5.10 L18.00 5.72 Z" fill="#fdc93b"/><path d="M7.89 18.66 A9.3 9.3 0 0 1 1.45 4.85 L5.60 7.50 L5.70 11.70 L9.90 13.90 Z" fill="#1ea362"/><circle cx="9.5" cy="9.5" r="4.5" fill="#fff"/><circle cx="9.5" cy="9.5" r="3.6" fill="#4688f1"/></svg>
<span class="t" style="top:740.40px;letter-spacing:-0.340px;color:#000;left:515.00px;">Release_Notes.html</span>
<span class="t" style="top:740.40px;letter-spacing:-0.850px;color:#000;right:746.22px;">KB</span>
<span class="t" style="top:740.40px;letter-spacing:0.000px;color:#000;right:767.89px;">3</span>
<span class="t" style="top:740.40px;letter-spacing:0.122px;color:#000;left:976.00px;">4/13/2021</span>
<span class="t" style="top:740.40px;letter-spacing:-0.626px;color:#000;left:1048.00px;">10:55:51</span>
<span class="t" style="top:740.40px;letter-spacing:1.111px;color:#000;left:1106.00px;">AM</span>
<span class="t" style="top:740.40px;letter-spacing:0.736px;color:#000;left:1163.36px;">rw-r--r--</span>
<span class="t" style="top:740.40px;letter-spacing:0.348px;color:#000;left:1263.13px;">cloudpro</span>
<svg style="position:absolute;left:494px;top:763px" width="18" height="20" viewBox="0 0 18 20" ><path d="M1.6 0.8 L11.4 0.8 L16.4 5.8 L16.4 19.2 L1.6 19.2 Z" fill="#f9f9f9" stroke="#7e7e7e" stroke-width="1.2" stroke-linejoin="round"/><path d="M11.4 0.8 L11.4 5.8 L16.4 5.8" fill="#fff" stroke="#7e7e7e" stroke-width="1" stroke-linejoin="round"/></svg>
<span class="t" style="top:764.40px;letter-spacing:-0.642px;color:#000;left:515.00px;">README.md</span>
<span class="t" style="top:764.40px;letter-spacing:-0.850px;color:#000;right:746.22px;">KB</span>
<span class="t" style="top:764.40px;letter-spacing:0.000px;color:#000;right:768.13px;">4</span>
<span class="t" style="top:764.40px;letter-spacing:0.122px;color:#000;left:976.00px;">4/13/2021</span>
<span class="t" style="top:764.40px;letter-spacing:-0.626px;color:#000;left:1048.00px;">10:55:51</span>
<span class="t" style="top:764.40px;letter-spacing:1.111px;color:#000;left:1106.00px;">AM</span>
<span class="t" style="top:764.40px;letter-spacing:0.736px;color:#000;left:1163.36px;">rw-r--r--</span>
<span class="t" style="top:764.40px;letter-spacing:0.348px;color:#000;left:1263.13px;">cloudpro</span>
<svg style="position:absolute;left:494px;top:787px" width="18" height="20" viewBox="0 0 18 20" ><path d="M1.6 0.8 L11.4 0.8 L16.4 5.8 L16.4 19.2 L1.6 19.2 Z" fill="#f9f9f9" stroke="#7e7e7e" stroke-width="1.2" stroke-linejoin="round"/><path d="M11.4 0.8 L11.4 5.8 L16.4 5.8" fill="#fff" stroke="#7e7e7e" stroke-width="1" stroke-linejoin="round"/></svg>
<span class="t" style="top:788.40px;letter-spacing:0.080px;color:#000;left:515.00px;">phpversionfail.php</span>
<span class="t" style="top:788.40px;letter-spacing:-0.850px;color:#000;right:746.22px;">KB</span>
<span class="t" style="top:788.40px;letter-spacing:0.000px;color:#000;right:767.89px;">3</span>
<span class="t" style="top:788.40px;letter-spacing:0.122px;color:#000;left:976.00px;">4/13/2021</span>
<span class="t" style="top:788.40px;letter-spacing:-0.626px;color:#000;left:1048.00px;">10:55:52</span>
<span class="t" style="top:788.40px;letter-spacing:1.111px;color:#000;left:1106.00px;">AM</span>
<span class="t" style="top:788.40px;letter-spacing:0.736px;color:#000;left:1163.36px;">rw-r--r--</span>
<span class="t" style="top:788.40px;letter-spacing:0.348px;color:#000;left:1263.13px;">cloudpro</span>
<svg style="position:absolute;left:494px;top:811px" width="18" height="20" viewBox="0 0 18 20" ><path d="M1.6 0.8 L11.4 0.8 L16.4 5.8 L16.4 19.2 L1.6 19.2 Z" fill="#f9f9f9" stroke="#7e7e7e" stroke-width="1.2" stroke-linejoin="round"/><path d="M11.4 0.8 L11.4 5.8 L16.4 5.8" fill="#fff" stroke="#7e7e7e" stroke-width="1" stroke-linejoin="round"/></svg>
<span class="t" style="top:812.40px;letter-spacing:-0.850px;color:#000;left:515.00px;">PEAR.php</span>
<span class="t" style="top:812.40px;letter-spacing:-0.850px;color:#000;right:746.22px;">KB</span>
<span class="t" style="top:812.40px;letter-spacing:-0.850px;color:#000;right:768.98px;">34</span>
<span class="t" style="top:812.40px;letter-spacing:0.122px;color:#000;left:976.00px;">4/13/2021</span>
<span class="t" style="top:812.40px;letter-spacing:-0.626px;color:#000;left:1048.00px;">10:55:51</span>
<span class="t" style="top:812.40px;letter-spacing:1.111px;color:#000;left:1106.00px;">AM</span>
<span class="t" style="top:812.40px;letter-spacing:0.736px;color:#000;left:1163.36px;">rw-r--r--</span>
<span class="t" style="top:812.40px;letter-spacing:0.348px;color:#000;left:1263.13px;">cloudpro</span>
<svg style="position:absolute;left:494px;top:835px" width="18" height="20" viewBox="0 0 18 20" ><path d="M1.6 0.8 L11.4 0.8 L16.4 5.8 L16.4 19.2 L1.6 19.2 Z" fill="#f9f9f9" stroke="#7e7e7e" stroke-width="1.2" stroke-linejoin="round"/><path d="M11.4 0.8 L11.4 5.8 L16.4 5.8" fill="#fff" stroke="#7e7e7e" stroke-width="1" stroke-linejoin="round"/></svg>
<span class="t" style="top:836.40px;letter-spacing:-0.000px;color:#000;left:515.00px;">parent_tabdata.php</span>
<span class="t" style="top:836.40px;letter-spacing:-0.850px;color:#000;right:746.22px;">KB</span>
<span class="t" style="top:836.40px;letter-spacing:0.000px;color:#000;right:767.89px;">1</span>
<span class="t" style="top:836.40px;letter-spacing:0.071px;color:#000;left:976.00px;">10/30/2021</span>
<span class="t" style="top:836.40px;letter-spacing:-0.626px;color:#000;left:1056.00px;">10:36:03</span>
<span class="t" style="top:836.40px;letter-spacing:1.111px;color:#000;left:1114.00px;">AM</span>
<span class="t" style="top:836.40px;letter-spacing:-0.043px;color:#000;left:1163.36px;">rwxrwxrwx</span>
<span class="t" style="top:836.40px;letter-spacing:0.348px;color:#000;left:1263.13px;">cloudpro</span>
<div style="position:absolute;left:667px;top:150px;width:262px;height:43px;box-sizing:border-box;border:3px solid #ff0000;filter:drop-shadow(2px 2px 2px rgba(0,0,0,0.6))"></div>
<div style="position:absolute;left:488px;top:437px;width:473px;height:42px;box-sizing:border-box;border:3px solid #ff0000;filter:drop-shadow(2px 2px 2px rgba(0,0,0,0.6))"></div>
</body></html>
